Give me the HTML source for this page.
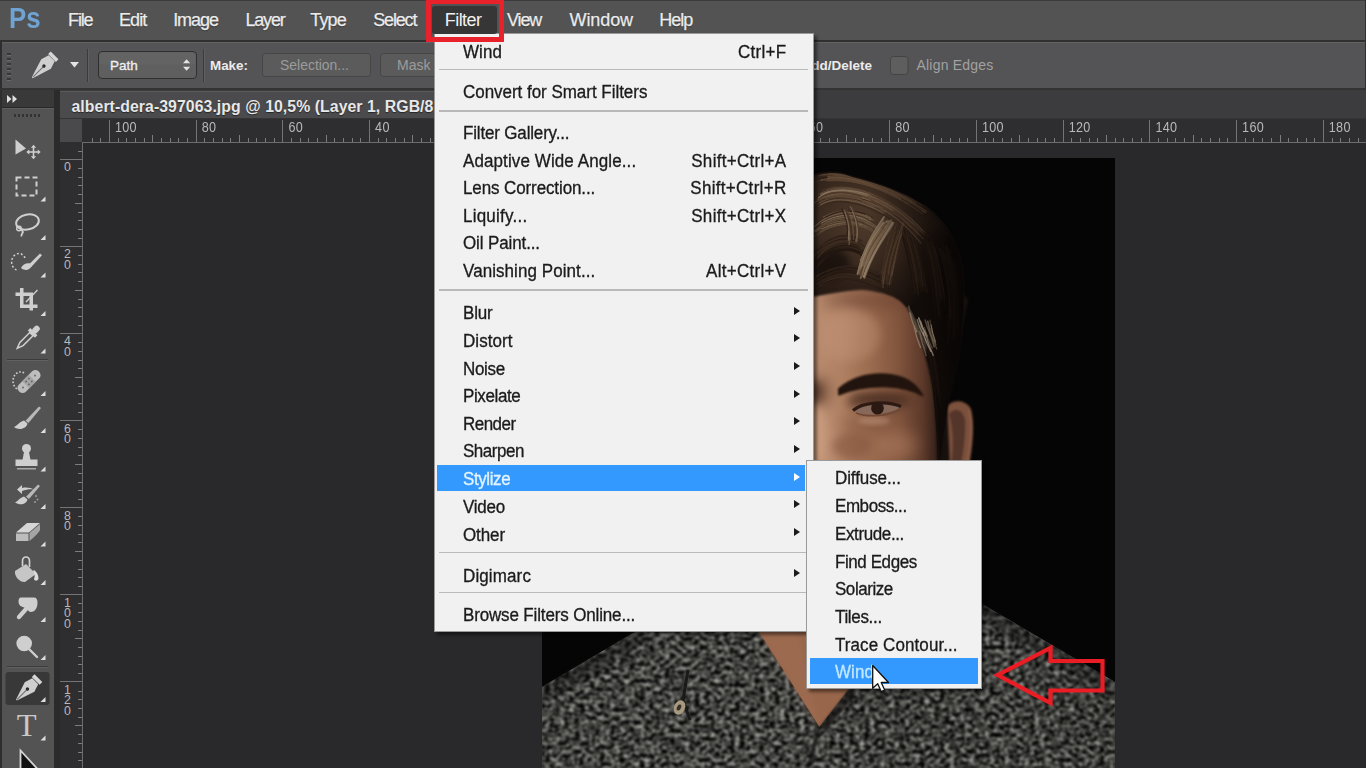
<!DOCTYPE html>
<html lang="en">
<head>
<meta charset="utf-8">
<title>Photoshop - Filter &gt; Stylize &gt; Wind</title>
<style>
*{box-sizing:border-box;margin:0;padding:0}
html,body{width:1366px;height:768px;overflow:hidden;background:#29292b}
body{font-family:"Liberation Sans",sans-serif;position:relative;color:#e6e6e6}
.abs{position:absolute}
#menubar{left:0;top:0;width:1366px;height:40px;background:#535354;border-top:1px solid #3c3c3c}
#menubar span{position:absolute;top:9px;line-height:21px;font-size:18px;color:#ececec;-webkit-text-stroke:0.25px #ececec;letter-spacing:-0.5px;white-space:nowrap;text-shadow:0 1px 1px rgba(0,0,0,.45)}
#ps{left:9px;top:2px;font-size:29px;font-weight:bold;color:#6fa3d4;transform:scaleX(.89);transform-origin:0 0;line-height:33px}
#mbline{left:0;top:40px;width:1366px;height:2px;background:#303030}
#optbar{left:2px;top:42px;width:1364px;height:46px;background:#545355;border-top:1px solid #626262}
#optline{left:0;top:88px;width:1366px;height:2px;background:#333}
#toolhead{left:2px;top:90px;width:52px;height:17px;background:#393939}
#tools{left:2px;top:108px;width:52px;height:660px;background:#535353;border-top:1px solid #5e5e5e}
#leftedge{left:0;top:41px;width:2px;height:727px;background:#2e2e2e}
#gap{left:54px;top:90px;width:6px;height:678px;background:#2b2b2b}
#tabbar{left:60px;top:90px;width:1306px;height:29px;background:#3c3c3e}
#tab{left:60px;top:91px;width:480px;height:28px;background:#4b4b4d;border-top:1px solid #5a5a5a}
#tabtxt{left:71.5px;top:97.7px;font-size:15.8px;letter-spacing:.07px;font-weight:bold;color:#e8e8e8;white-space:nowrap;line-height:18px;text-shadow:0 1px 1px rgba(0,0,0,.5)}
#hruler{left:60px;top:119px;width:1306px;height:24px;background:#2e2e30;border-bottom:1px solid #6c6c6c;overflow:hidden}
#hruler i,#vruler i{position:absolute;background:#7c7c7c;display:block}
#hruler i{bottom:0;width:1px;margin-left:-60px}
#hruler i.mt{height:22px;background:#747474}
#hruler i.t5{height:7px}
#hruler i.t2{height:4px}
#hruler b{position:absolute;top:3.2px;font-weight:normal;font-size:12.6px;letter-spacing:.3px;color:#b8b8b8;margin-left:-60px;line-height:13px;transform:scaleY(1.14);transform-origin:0 50%}
#rcorner{left:60px;top:119px;width:22px;height:24px;background:#4a4a4c}
#vruler{left:60px;top:142px;width:23px;height:626px;background:#2e2e30;border-right:1px solid #6c6c6c;overflow:hidden}
#vruler i{right:0;height:1px}
#vruler i.mt{width:22px;background:#747474}
#vruler i.t5{width:7px}
#vruler i.t2{width:4px}
#vruler b{position:absolute;left:3.5px;font-weight:normal;font-size:12.4px;color:#b8b8b8;line-height:10.6px;text-align:center;width:8px}
.tri{position:absolute;width:0;height:0;border-left:5px solid transparent;border-bottom:5px solid #d8d8d8;left:40px}
.tsep{position:absolute;left:5px;width:41px;height:2px;background:#3e3e3e;border-bottom:1px solid #5e5e5e}
.menu{background:#f1f1f1;border:1px solid #9a9a9a;box-shadow:3px 3px 3px rgba(0,0,0,.45)}
.mi{transform:scaleY(1.06);transform-origin:0 50%;position:absolute;height:28px;line-height:28px;white-space:nowrap;font-size:17px;color:#1b1b1b;-webkit-text-stroke:0.3px currentColor;letter-spacing:-0.1px}
.sc{transform:scaleY(1.06);transform-origin:0 50%;position:absolute;height:28px;line-height:28px;white-space:nowrap;font-size:17px;color:#1b1b1b;-webkit-text-stroke:0.3px currentColor;right:26.3px;text-align:right;letter-spacing:0.3px}
.sep{position:absolute;height:1.4px;background:#b9b9b9;left:4px;right:5px}
.arr{position:absolute;width:0;height:0;border-top:4.5px solid transparent;border-bottom:4.5px solid transparent;border-left:6px solid #1b1b1b}
.hl{position:absolute;background:#3399ff}
#tabline{left:60px;top:117.6px;width:1306px;height:1.5px;background:#343434}
</style>
</head>
<body>
<svg class="abs" id="photo" style="left:542px;top:158px" width="573" height="610" viewBox="542 158 573 610">
<defs>
  <filter id="knit" x="0" y="0" width="100%" height="100%" color-interpolation-filters="sRGB">
    <feTurbulence type="fractalNoise" baseFrequency="0.2 0.24" numOctaves="2" seed="11" result="n"/>
    <feColorMatrix in="n" type="matrix" values="1.3 0 0 0 -0.395  1.3 0 0 0 -0.395  1.26 0 0 0 -0.385  0 0 0 0 1" result="g0"/>
    <feGaussianBlur in="g0" stdDeviation="0.85" result="g"/>
    <feComposite in="g" in2="SourceGraphic" operator="in"/>
  </filter>
  <filter color-interpolation-filters="sRGB" id="b1" x="-20%" y="-20%" width="140%" height="140%"><feGaussianBlur color-interpolation-filters="sRGB" stdDeviation="1"/></filter>
  <filter color-interpolation-filters="sRGB" id="b06" x="-20%" y="-20%" width="140%" height="140%"><feGaussianBlur color-interpolation-filters="sRGB" stdDeviation="0.6"/></filter>
  <filter color-interpolation-filters="sRGB" id="b08" x="-10%" y="-10%" width="120%" height="120%"><feGaussianBlur color-interpolation-filters="sRGB" stdDeviation="0.55"/></filter>
  <filter color-interpolation-filters="sRGB" id="b2" x="-20%" y="-20%" width="140%" height="140%"><feGaussianBlur color-interpolation-filters="sRGB" stdDeviation="2"/></filter>
  <filter color-interpolation-filters="sRGB" id="b4" x="-30%" y="-30%" width="160%" height="160%"><feGaussianBlur color-interpolation-filters="sRGB" stdDeviation="4"/></filter>
  <filter color-interpolation-filters="sRGB" id="b8" x="-40%" y="-40%" width="180%" height="180%"><feGaussianBlur color-interpolation-filters="sRGB" stdDeviation="8"/></filter>
  <linearGradient id="skinH" x1="814" y1="0" x2="940" y2="0" gradientUnits="userSpaceOnUse">
    <stop offset="0" stop-color="#b98c6f"/><stop offset=".22" stop-color="#b08163"/><stop offset=".46" stop-color="#9a6a4e"/><stop offset=".68" stop-color="#7f533c"/><stop offset=".86" stop-color="#5c392a"/><stop offset="1" stop-color="#2e1d16"/>
  </linearGradient>
  <radialGradient id="hairG" cx="862" cy="222" r="100" gradientUnits="userSpaceOnUse">
    <stop offset="0" stop-color="#4e3a2b"/><stop offset=".45" stop-color="#3a2a1f"/><stop offset=".8" stop-color="#261a14"/><stop offset="1" stop-color="#150f0c"/>
  </radialGradient>
  <linearGradient id="hairShade" x1="870" y1="0" x2="962" y2="0" gradientUnits="userSpaceOnUse">
    <stop offset="0" stop-color="#0d0806" stop-opacity="0"/><stop offset=".55" stop-color="#0d0806" stop-opacity=".45"/><stop offset="1" stop-color="#080504" stop-opacity=".9"/>
  </linearGradient>
  <clipPath id="imgclip"><rect x="542" y="158" width="573" height="610"/></clipPath>
  <clipPath id="hairclip"><path d="M811,176 C825,171 840,172 852,177 C880,184 905,193 927,208 C945,222 958,243 962,268 C966,300 963,345 952,385 L948,402 L940,462 L936,400 C932,370 922,340 912,318 C905,300 893,293 862,290 C840,291 825,295 811,297 Z"/></clipPath>
</defs>
<g clip-path="url(#imgclip)">
  <rect x="542" y="158" width="573" height="610" fill="#060505"/>
  <!-- ear -->
  <g filter="url(#b1)">
    <path d="M945,410 C949,399 965,398 971,409 C975,424 973,446 968,472 L942,472 Z" fill="#7b503c"/>
    <path d="M949,414 C955,407 963,409 965,420 C966,436 963,452 960,472 L950,472 C954,450 954,430 949,414Z" fill="#54352a"/>
    <path d="M969,410 C973,425 971,446 966,470" fill="none" stroke="#96674f" stroke-width="1.500" opacity=".8"/>
  </g>
  <!-- face skin -->
  <path d="M805,280 L905,280 C925,330 936,380 938,470 L805,470 Z" fill="url(#skinH)"/>
  <!-- soft light/shadow on face -->
  <g filter="url(#b8)">
    <ellipse cx="830" cy="330" rx="26" ry="30" fill="#bb8d70" opacity=".55"/>
    <ellipse cx="822" cy="440" rx="16" ry="34" fill="#c29477" opacity=".7"/>
    <ellipse cx="895" cy="445" rx="22" ry="14" fill="#ab7a5d" opacity=".6"/>
    <ellipse cx="872" cy="300" rx="50" ry="9" fill="#6d4634" opacity=".7"/>
    <ellipse cx="870" cy="425" rx="34" ry="9" fill="#7c503b" opacity=".55"/>
    <ellipse cx="819" cy="392" rx="9" ry="14" fill="#5a3a2b" opacity=".8"/>
  </g>
  <!-- sideburn / dark side hair -->
  <path d="M898,285 C912,310 926,350 933,390 C936,420 937,445 937,470 L950,470 L947,400 L968,300 L930,250 Z" fill="#17100d" filter="url(#b1)"/>
  <ellipse cx="878" cy="402" rx="32" ry="9" fill="#4a2e22" opacity=".55" filter="url(#b4)"/>
  <ellipse cx="874" cy="421" rx="16" ry="4" fill="#b98f78" opacity=".55" filter="url(#b2)"/>
  <g filter="url(#b4)">
    <ellipse cx="817" cy="436" rx="8" ry="30" fill="#cb9d7f" opacity=".85"/>
    <ellipse cx="852" cy="446" rx="20" ry="13" fill="#83543d" opacity=".6"/>
    <ellipse cx="880" cy="398" rx="30" ry="5" fill="#42281d" opacity=".7"/>
    <ellipse cx="816" cy="392" rx="5" ry="11" fill="#4a2f23" opacity=".8"/>
    <ellipse cx="850" cy="335" rx="30" ry="26" fill="#be9174" opacity=".45"/>
  </g>
  <!-- eyebrow -->
  <g filter="url(#b1)">
    <path d="M839,389 C852,378 868,373.500 886,374.500 C902,375.500 915,382 922.500,395.500 C913,389.500 900,387 886,386.500 C868,386 852,389 839,394.500 Z" fill="#21130d" stroke="#21130d" stroke-width="2" stroke-linejoin="round"/>
  </g>
  <!-- eye -->
  <g filter="url(#b06)">
    <path d="M853,411 C862,403 888,401 901,407 C892,414 866,417 853,411Z" fill="#86695a"/>
    <path d="M853,410.500 C862,402 888,400.500 901,406.500" fill="none" stroke="#2c1a13" stroke-width="3.200"/>
    <circle cx="877.500" cy="408.200" r="6.300" fill="#2a1912"/>
    <path d="M856,413 C868,418 888,416 899,410" fill="none" stroke="#6e4836" stroke-width="1.500"/>
  </g>
  <!-- hair mass -->
  <path d="M811,176 C825,171 840,172 852,177 C880,184 905,193 927,208 C945,222 958,243 962,268 C966,300 963,345 952,385 L948,402 L940,462 L936,400 C932,370 922,340 912,318 C905,300 893,293 862,290 C840,291 825,295 811,297 Z" fill="url(#hairG)" filter="url(#b1)"/>
  <g clip-path="url(#hairclip)">
    <g filter="url(#b4)">
      <ellipse cx="830" cy="264" rx="20" ry="16" fill="#150e0b" opacity=".8"/>
      <ellipse cx="935" cy="275" rx="20" ry="45" fill="#120c09" opacity=".55"/>
      <ellipse cx="952" cy="300" rx="12" ry="70" fill="#0a0706" opacity=".85"/>
    </g>
    <g fill="none" stroke-linecap="round" filter="url(#b08)">
<path d="M824.5,254.3 C838.6,240.6 853.0,242.7 866.2,254.6" stroke="#2a1d15" stroke-width="0.9" opacity="0.88"/>
<path d="M814.7,258.2 C826.7,243.0 843.8,237.3 856.9,244.6" stroke="#3e2d21" stroke-width="0.6" opacity="0.45"/>
<path d="M818.0,265.7 C829.1,250.8 845.5,245.2 857.9,253.1" stroke="#32241a" stroke-width="1.5" opacity="0.9"/>
<path d="M816.2,252.0 C829.2,240.5 842.7,236.6 856.4,241.8" stroke="#1f1510" stroke-width="1.0" opacity="0.61"/>
<path d="M823.8,250.3 C833.9,243.7 843.6,240.8 855.4,244.8" stroke="#2a1d15" stroke-width="1.0" opacity="0.8"/>
<path d="M825.4,252.3 C836.2,244.2 848.3,241.9 856.8,247.5" stroke="#1f1510" stroke-width="1.4" opacity="0.47"/>
<path d="M815.5,268.8 C828.7,251.7 846.4,244.6 860.1,253.0" stroke="#2a1d15" stroke-width="1.1" opacity="0.81"/>
<path d="M817.7,252.1 C834.8,236.2 851.3,235.0 863.4,248.0" stroke="#32241a" stroke-width="0.6" opacity="0.91"/>
<path d="M817.3,248.0 C834.9,233.0 852.1,229.8 864.8,243.5" stroke="#3e2d21" stroke-width="0.8" opacity="0.68"/>
<path d="M825.5,258.3 C840.8,247.2 855.7,247.4 867.8,261.2" stroke="#241811" stroke-width="1.5" opacity="0.76"/>
<path d="M816.7,257.6 C830.7,243.4 844.6,240.3 856.8,245.6" stroke="#1f1510" stroke-width="0.9" opacity="0.8"/>
<path d="M819.5,250.7 C835.0,237.3 851.2,233.5 864.8,246.9" stroke="#1f1510" stroke-width="1.0" opacity="0.86"/>
<path d="M824.5,254.1 C836.8,243.6 849.9,243.4 860.6,250.7" stroke="#1f1510" stroke-width="1.0" opacity="0.71"/>
<path d="M823.4,245.9 C838.5,234.9 852.9,235.3 866.7,248.4" stroke="#3e2d21" stroke-width="0.8" opacity="0.73"/>
<path d="M816.4,263.9 C834.2,244.4 854.7,242.1 869.5,261.2" stroke="#32241a" stroke-width="0.7" opacity="0.9"/>
<path d="M825.3,242.8 C836.5,235.4 848.4,233.3 861.3,241.6" stroke="#1f1510" stroke-width="0.9" opacity="0.59"/>
<path d="M813.9,257.3 C830.7,238.0 850.6,234.9 866.0,251.8" stroke="#32241a" stroke-width="0.9" opacity="0.86"/>
<path d="M818.4,258.8 C831.9,247.1 845.1,241.2 858.5,246.2" stroke="#2a1d15" stroke-width="0.8" opacity="0.91"/>
<path d="M817.5,257.4 C834.5,240.7 852.0,238.9 866.2,254.1" stroke="#32241a" stroke-width="1.1" opacity="0.58"/>
<path d="M820.1,263.7 C833.8,248.9 848.9,245.5 862.1,255.0" stroke="#1f1510" stroke-width="0.5" opacity="0.52"/>
<path d="M818.3,253.1 C831.6,239.6 850.1,237.6 861.6,247.1" stroke="#3e2d21" stroke-width="1.0" opacity="0.88"/>
<path d="M824.8,255.4 C836.4,249.1 847.1,245.3 855.7,251.2" stroke="#241811" stroke-width="0.6" opacity="0.45"/>
<path d="M822.8,252.2 C833.2,244.5 845.9,241.5 858.0,246.5" stroke="#3e2d21" stroke-width="1.0" opacity="0.79"/>
<path d="M826.4,252.8 C836.1,245.5 850.9,244.1 861.7,250.9" stroke="#32241a" stroke-width="1.0" opacity="0.72"/>
<path d="M817.6,257.8 C828.5,242.7 845.4,240.1 857.6,244.0" stroke="#3e2d21" stroke-width="1.5" opacity="0.95"/>
<path d="M813.2,264.8 C831.7,244.6 849.8,239.1 867.8,254.1" stroke="#241811" stroke-width="0.7" opacity="0.85"/>
<path d="M815.2,252.5 C828.7,235.2 845.9,230.7 861.8,240.5" stroke="#2a1d15" stroke-width="0.8" opacity="0.75"/>
<path d="M824.3,250.0 C836.0,241.6 849.4,241.4 860.2,247.3" stroke="#1f1510" stroke-width="0.6" opacity="0.57"/>
<path d="M818.4,264.0 C833.6,244.6 852.5,241.1 868.0,259.2" stroke="#2a1d15" stroke-width="0.6" opacity="0.51"/>
<path d="M816.3,259.2 C833.2,240.3 852.5,237.4 865.7,255.2" stroke="#32241a" stroke-width="1.2" opacity="0.49"/>
<path d="M821.0,260.9 C833.7,248.7 848.0,246.6 859.8,252.0" stroke="#1f1510" stroke-width="1.1" opacity="0.85"/>
<path d="M824.6,249.6 C837.4,239.6 849.1,237.5 860.9,246.0" stroke="#3e2d21" stroke-width="1.2" opacity="0.62"/>
<path d="M818.0,255.7 C832.7,237.8 852.8,235.0 868.1,253.1" stroke="#3e2d21" stroke-width="0.7" opacity="0.58"/>
<path d="M813.8,255.8 C826.8,241.1 844.1,236.2 859.0,243.4" stroke="#3e2d21" stroke-width="1.3" opacity="0.53"/>
<path d="M817.1,263.0 C830.4,247.3 848.4,243.4 862.1,253.6" stroke="#1f1510" stroke-width="1.2" opacity="0.54"/>
<path d="M814.1,283.1 C834.9,265.2 859.1,266.7 890.6,285.3" stroke="#3e2d21" stroke-width="0.6" opacity="0.84"/>
<path d="M815.3,283.2 C832.7,267.4 853.5,268.3 880.1,282.0" stroke="#2a1d15" stroke-width="1.2" opacity="0.77"/>
<path d="M827.3,276.8 C839.8,272.3 855.0,270.1 870.0,277.5" stroke="#32241a" stroke-width="1.0" opacity="0.49"/>
<path d="M816.2,281.4 C835.0,266.4 853.7,266.2 879.9,279.5" stroke="#3e2d21" stroke-width="1.0" opacity="0.52"/>
<path d="M827.3,271.9 C843.3,261.6 861.9,265.3 882.6,276.6" stroke="#32241a" stroke-width="0.6" opacity="0.49"/>
<path d="M814.8,279.6 C831.7,267.4 852.3,264.2 876.9,276.7" stroke="#2a1d15" stroke-width="0.6" opacity="0.83"/>
<path d="M825.5,276.7 C838.0,268.2 852.0,269.9 869.3,273.6" stroke="#2a1d15" stroke-width="1.2" opacity="0.58"/>
<path d="M817.9,284.0 C834.0,276.1 851.1,273.0 871.7,282.3" stroke="#2a1d15" stroke-width="0.6" opacity="0.93"/>
<path d="M821.5,283.2 C836.2,274.1 852.8,274.1 872.6,283.8" stroke="#32241a" stroke-width="1.2" opacity="0.5"/>
<path d="M815.7,284.7 C836.4,268.4 857.1,270.5 883.4,284.2" stroke="#3e2d21" stroke-width="0.5" opacity="0.78"/>
<path d="M819.6,273.8 C839.3,265.7 856.4,263.8 880.2,275.8" stroke="#1f1510" stroke-width="0.9" opacity="0.56"/>
<path d="M816.0,280.2 C834.4,266.2 855.4,267.3 881.5,280.1" stroke="#241811" stroke-width="1.0" opacity="0.62"/>
<path d="M815.9,276.8 C835.5,264.7 855.5,265.1 877.4,275.1" stroke="#3e2d21" stroke-width="1.4" opacity="0.76"/>
<path d="M819.2,285.1 C833.1,275.5 849.7,272.8 867.9,280.6" stroke="#3e2d21" stroke-width="1.0" opacity="0.8"/>
<path d="M827.7,276.4 C841.3,268.1 860.3,272.0 879.3,282.5" stroke="#32241a" stroke-width="0.8" opacity="0.49"/>
<path d="M819.9,275.7 C836.8,265.1 856.9,264.5 879.7,277.3" stroke="#1f1510" stroke-width="1.4" opacity="0.79"/>
<path d="M824.4,282.1 C843.2,273.7 861.8,276.0 880.9,286.0" stroke="#3e2d21" stroke-width="0.9" opacity="0.83"/>
<path d="M815.9,282.4 C836.8,270.8 858.0,270.8 882.1,282.7" stroke="#1f1510" stroke-width="0.8" opacity="0.58"/>
<path d="M828.6,278.7 C840.7,271.3 856.1,274.1 873.0,280.5" stroke="#3e2d21" stroke-width="0.7" opacity="0.69"/>
<path d="M815.8,284.6 C834.3,271.4 853.4,270.0 877.3,282.1" stroke="#3e2d21" stroke-width="0.7" opacity="0.75"/>
<path d="M823.3,279.7 C843.1,272.8 861.1,274.2 884.3,287.5" stroke="#32241a" stroke-width="1.4" opacity="0.76"/>
<path d="M827.6,279.6 C839.2,275.1 854.1,275.6 868.1,280.3" stroke="#32241a" stroke-width="1.2" opacity="0.91"/>
<path d="M822.1,283.5 C841.2,274.1 863.6,277.3 889.5,294.6" stroke="#2a1d15" stroke-width="0.7" opacity="0.92"/>
<path d="M814.5,283.4 C833.5,267.3 859.3,268.3 889.5,288.5" stroke="#1f1510" stroke-width="0.5" opacity="0.85"/>
<path d="M825.0,283.1 C840.8,278.2 855.9,276.7 871.0,285.0" stroke="#2a1d15" stroke-width="1.0" opacity="0.48"/>
<path d="M815.7,280.4 C835.0,268.1 859.1,268.1 882.3,283.6" stroke="#2a1d15" stroke-width="1.0" opacity="0.51"/>
<path d="M828.0,269.5 C840.8,266.5 856.4,264.1 873.0,271.1" stroke="#3e2d21" stroke-width="0.5" opacity="0.71"/>
<path d="M822.7,283.5 C840.4,276.1 862.2,278.2 887.5,292.5" stroke="#241811" stroke-width="1.1" opacity="0.47"/>
<path d="M827.4,271.4 C842.9,263.2 860.0,265.2 878.5,272.8" stroke="#32241a" stroke-width="0.9" opacity="0.94"/>
<path d="M815.6,289.2 C833.6,277.7 853.0,275.0 876.9,286.2" stroke="#3e2d21" stroke-width="0.5" opacity="0.65"/>
<path d="M949.4,251.9 C956.8,274.2 958.6,301.8 957.4,334.7" stroke="#3e2d21" stroke-width="0.6" opacity="0.52"/>
<path d="M940.4,247.9 C950.0,266.1 952.2,289.1 951.7,319.3" stroke="#3e2d21" stroke-width="1.0" opacity="0.67"/>
<path d="M941.6,258.9 C947.3,275.8 950.4,294.4 948.0,317.0" stroke="#32241a" stroke-width="1.0" opacity="0.76"/>
<path d="M935.6,241.1 C946.7,261.8 951.5,292.3 950.4,330.3" stroke="#1f1510" stroke-width="1.1" opacity="0.59"/>
<path d="M943.5,253.0 C951.0,272.0 954.5,294.6 951.7,325.6" stroke="#2a1d15" stroke-width="1.4" opacity="0.6"/>
<path d="M945.5,256.9 C951.3,272.9 953.6,292.6 952.0,316.9" stroke="#32241a" stroke-width="0.9" opacity="0.62"/>
<path d="M939.2,249.2 C945.7,267.4 949.7,291.7 950.7,318.2" stroke="#3e2d21" stroke-width="1.4" opacity="0.87"/>
<path d="M943.1,250.2 C951.7,275.1 955.3,305.2 951.7,340.4" stroke="#3e2d21" stroke-width="0.6" opacity="0.81"/>
<path d="M945.0,251.2 C948.8,271.2 952.1,291.9 952.4,320.5" stroke="#241811" stroke-width="1.2" opacity="0.48"/>
<path d="M945.7,256.6 C949.4,272.5 953.4,293.9 953.4,316.9" stroke="#32241a" stroke-width="1.2" opacity="0.92"/>
<path d="M946.2,253.4 C954.6,271.7 957.4,296.6 954.8,328.2" stroke="#32241a" stroke-width="1.2" opacity="0.67"/>
<path d="M945.5,258.7 C951.1,276.5 953.6,295.4 952.8,318.5" stroke="#1f1510" stroke-width="0.8" opacity="0.5"/>
<path d="M945.2,247.0 C955.8,271.6 958.0,302.5 954.8,339.8" stroke="#1f1510" stroke-width="1.3" opacity="0.74"/>
<path d="M953.2,260.1 C957.2,277.1 959.7,297.8 957.7,325.0" stroke="#3e2d21" stroke-width="1.5" opacity="0.65"/>
<path d="M944.6,241.4 C955.9,259.3 959.2,282.6 958.9,315.0" stroke="#241811" stroke-width="0.8" opacity="0.5"/>
<path d="M947.0,258.0 C954.3,280.3 955.7,308.3 953.5,343.3" stroke="#3e2d21" stroke-width="0.6" opacity="0.6"/>
<path d="M948.2,258.0 C950.9,273.2 953.7,291.0 955.6,314.9" stroke="#2a1d15" stroke-width="0.6" opacity="0.48"/>
<path d="M939.9,250.0 C946.4,269.4 950.7,295.2 948.2,328.2" stroke="#241811" stroke-width="0.6" opacity="0.75"/>
<path d="M947.7,258.7 C953.1,280.8 956.7,305.6 953.2,337.8" stroke="#3e2d21" stroke-width="0.6" opacity="0.74"/>
<path d="M946.7,245.4 C954.0,264.1 957.4,287.6 956.8,315.5" stroke="#241811" stroke-width="0.8" opacity="0.62"/>
<path d="M936.4,244.5 C945.0,264.6 951.6,292.7 947.6,327.9" stroke="#1f1510" stroke-width="1.5" opacity="0.66"/>
<path d="M949.0,257.6 C955.4,276.0 958.5,302.4 954.4,331.5" stroke="#2a1d15" stroke-width="1.0" opacity="0.69"/>
<path d="M942.1,248.6 C951.9,265.4 954.1,290.7 954.7,319.7" stroke="#2a1d15" stroke-width="0.9" opacity="0.77"/>
<path d="M946.1,245.1 C953.9,263.0 957.1,285.1 957.9,312.7" stroke="#241811" stroke-width="1.1" opacity="0.85"/>
<path d="M942.5,253.5 C949.6,277.5 951.6,305.6 948.0,342.9" stroke="#3e2d21" stroke-width="1.0" opacity="0.71"/>
<path d="M952.3,256.5 C959.1,277.6 962.3,304.4 957.0,337.8" stroke="#241811" stroke-width="0.7" opacity="0.48"/>
<path d="M941.6,240.8 C950.8,262.3 956.5,290.7 955.2,323.2" stroke="#2a1d15" stroke-width="1.4" opacity="0.79"/>
<path d="M946.5,246.0 C954.7,268.9 959.2,295.5 957.4,327.4" stroke="#32241a" stroke-width="1.4" opacity="0.85"/>
<path d="M947.5,253.7 C953.4,273.4 956.0,300.4 954.6,334.4" stroke="#32241a" stroke-width="1.3" opacity="0.93"/>
<path d="M949.0,253.1 C957.0,272.9 959.8,302.0 958.3,335.6" stroke="#241811" stroke-width="1.0" opacity="0.86"/>
<path d="M924.8,245.7 C932.3,266.8 934.0,291.3 935.4,316.3" stroke="#1f1510" stroke-width="1.1" opacity="0.72"/>
<path d="M932.6,238.1 C937.2,258.2 940.4,279.6 943.0,304.1" stroke="#241811" stroke-width="0.8" opacity="0.49"/>
<path d="M929.0,233.3 C935.5,254.2 940.7,277.6 942.6,302.9" stroke="#2a1d15" stroke-width="0.5" opacity="0.71"/>
<path d="M927.5,239.7 C932.4,256.9 936.7,275.4 938.4,296.8" stroke="#3e2d21" stroke-width="0.8" opacity="0.5"/>
<path d="M932.1,248.2 C936.9,262.9 937.9,279.9 940.5,296.2" stroke="#3e2d21" stroke-width="1.2" opacity="0.92"/>
<path d="M929.2,249.7 C933.8,264.3 935.5,282.2 939.7,301.1" stroke="#32241a" stroke-width="1.1" opacity="0.65"/>
<path d="M927.9,233.6 C933.6,253.8 938.8,276.6 940.7,304.8" stroke="#2a1d15" stroke-width="1.1" opacity="0.74"/>
<path d="M922.3,232.6 C931.4,254.9 936.3,284.1 939.1,316.6" stroke="#241811" stroke-width="1.1" opacity="0.65"/>
<path d="M928.0,241.7 C934.6,254.8 937.0,273.9 940.7,294.2" stroke="#2a1d15" stroke-width="0.9" opacity="0.88"/>
<path d="M920.7,235.2 C927.2,255.6 932.3,284.7 934.4,312.1" stroke="#241811" stroke-width="0.7" opacity="0.91"/>
<path d="M924.7,233.2 C932.5,253.7 938.4,277.3 938.2,301.7" stroke="#241811" stroke-width="0.8" opacity="0.62"/>
<path d="M923.4,235.1 C932.3,257.4 936.2,284.8 941.0,317.5" stroke="#32241a" stroke-width="0.9" opacity="0.46"/>
<path d="M927.9,245.1 C933.0,261.6 935.7,279.6 937.1,298.1" stroke="#1f1510" stroke-width="1.3" opacity="0.58"/>
<path d="M929.7,236.7 C936.6,251.3 940.0,273.8 944.1,295.4" stroke="#241811" stroke-width="0.7" opacity="0.78"/>
<path d="M931.4,238.7 C940.0,260.8 942.7,282.6 945.6,308.0" stroke="#2a1d15" stroke-width="1.1" opacity="0.61"/>
<path d="M929.4,238.2 C934.7,256.3 938.0,282.2 940.8,307.3" stroke="#1f1510" stroke-width="0.6" opacity="0.57"/>
<path d="M931.5,242.3 C936.2,258.6 939.1,278.7 941.9,299.0" stroke="#32241a" stroke-width="1.4" opacity="0.76"/>
<path d="M923.2,233.9 C928.9,252.6 934.2,274.1 937.2,299.7" stroke="#1f1510" stroke-width="0.5" opacity="0.53"/>
<path d="M934.9,246.7 C939.0,261.7 941.0,281.5 944.3,302.8" stroke="#241811" stroke-width="1.4" opacity="0.46"/>
<path d="M926.2,236.2 C932.4,254.8 935.4,272.7 939.6,295.0" stroke="#2a1d15" stroke-width="1.1" opacity="0.92"/>
<path d="M922.5,239.1 C932.3,259.9 936.3,287.4 938.4,312.6" stroke="#3e2d21" stroke-width="1.1" opacity="0.47"/>
<path d="M929.6,243.6 C934.6,261.2 938.2,281.7 940.3,302.3" stroke="#32241a" stroke-width="1.1" opacity="0.84"/>
<path d="M924.7,237.3 C933.8,258.5 938.1,287.3 939.1,318.3" stroke="#32241a" stroke-width="1.5" opacity="0.61"/>
<path d="M929.1,250.6 C932.2,264.9 935.9,278.6 936.6,296.7" stroke="#32241a" stroke-width="1.5" opacity="0.85"/>
<path d="M922.8,235.2 C929.8,252.9 934.5,277.9 936.6,305.1" stroke="#1f1510" stroke-width="1.2" opacity="0.94"/>
<path d="M928.4,239.5 C936.0,259.8 938.5,282.5 939.6,310.9" stroke="#1f1510" stroke-width="1.5" opacity="0.57"/>
<path d="M925.8,241.5 C930.4,256.1 934.0,275.0 936.5,296.7" stroke="#32241a" stroke-width="0.8" opacity="0.83"/>
<path d="M921.5,239.6 C928.0,255.6 932.1,277.1 933.3,301.6" stroke="#2a1d15" stroke-width="0.6" opacity="0.6"/>
<path d="M934.3,247.4 C938.7,263.7 941.5,279.0 944.7,298.4" stroke="#3e2d21" stroke-width="1.2" opacity="0.86"/>
<path d="M934.1,237.6 C938.4,256.8 943.8,277.9 944.6,303.6" stroke="#241811" stroke-width="0.5" opacity="0.69"/>
<path d="M907.1,240.2 C911.7,251.4 913.2,265.0 915.4,277.2" stroke="#32241a" stroke-width="1.2" opacity="0.79"/>
<path d="M905.2,230.2 C911.0,243.6 915.5,260.2 917.2,277.3" stroke="#443224" stroke-width="0.8" opacity="0.56"/>
<path d="M906.8,231.0 C911.7,245.8 915.3,261.8 918.7,278.6" stroke="#32241a" stroke-width="0.6" opacity="0.66"/>
<path d="M903.3,234.3 C908.3,247.9 911.5,264.8 915.8,279.8" stroke="#32241a" stroke-width="0.9" opacity="0.53"/>
<path d="M905.9,227.2 C913.5,243.0 917.7,263.7 920.2,283.5" stroke="#3e2d21" stroke-width="1.2" opacity="0.9"/>
<path d="M902.6,226.1 C908.0,242.9 912.9,260.6 916.6,283.4" stroke="#241811" stroke-width="0.7" opacity="0.81"/>
<path d="M902.7,233.3 C906.2,245.5 911.2,261.0 911.9,278.5" stroke="#2a1d15" stroke-width="0.7" opacity="0.51"/>
<path d="M914.6,238.7 C919.0,255.4 923.2,271.3 927.4,293.0" stroke="#3a2a1f" stroke-width="1.3" opacity="0.61"/>
<path d="M911.1,231.1 C917.5,250.1 923.0,268.7 924.8,291.9" stroke="#2a1d15" stroke-width="1.4" opacity="0.76"/>
<path d="M907.0,237.7 C911.4,251.5 916.6,269.5 918.3,287.3" stroke="#3a2a1f" stroke-width="1.4" opacity="0.73"/>
<path d="M902.1,237.4 C908.8,254.4 912.8,273.8 915.0,293.7" stroke="#32241a" stroke-width="1.1" opacity="0.8"/>
<path d="M913.7,238.1 C916.6,249.3 919.8,265.6 923.5,279.3" stroke="#241811" stroke-width="1.3" opacity="0.57"/>
<path d="M904.4,238.3 C909.6,249.2 911.8,262.3 915.9,276.0" stroke="#241811" stroke-width="0.9" opacity="0.83"/>
<path d="M904.8,228.7 C911.5,246.7 916.4,267.3 918.9,294.0" stroke="#2a1d15" stroke-width="0.8" opacity="0.76"/>
<path d="M903.9,229.5 C908.6,244.6 913.5,257.7 917.6,275.1" stroke="#241811" stroke-width="1.3" opacity="0.74"/>
<path d="M900.3,230.9 C905.9,246.9 911.0,268.0 915.7,290.4" stroke="#443224" stroke-width="0.5" opacity="0.52"/>
<path d="M902.5,237.0 C907.7,250.4 911.5,263.0 913.9,278.3" stroke="#32241a" stroke-width="0.8" opacity="0.63"/>
<path d="M906.6,235.3 C909.9,251.7 914.5,265.5 917.2,283.8" stroke="#32241a" stroke-width="0.8" opacity="0.78"/>
<path d="M907.9,240.1 C912.3,252.2 915.8,266.0 916.3,283.1" stroke="#443224" stroke-width="0.9" opacity="0.87"/>
<path d="M910.9,233.2 C914.0,249.0 916.4,260.8 919.6,279.2" stroke="#443224" stroke-width="0.7" opacity="0.75"/>
<path d="M901.7,236.3 C905.4,247.3 909.7,262.6 913.0,277.8" stroke="#241811" stroke-width="0.6" opacity="0.89"/>
<path d="M914.0,235.8 C914.9,248.1 920.7,262.2 921.7,276.1" stroke="#3a2a1f" stroke-width="1.0" opacity="0.57"/>
<path d="M905.1,224.9 C910.0,240.6 915.0,258.6 920.4,279.5" stroke="#241811" stroke-width="0.7" opacity="0.94"/>
<path d="M901.0,229.5 C905.4,245.0 908.8,261.6 912.0,279.2" stroke="#241811" stroke-width="1.2" opacity="0.92"/>
<path d="M910.0,230.8 C917.3,247.2 920.2,268.5 924.8,291.1" stroke="#2a1d15" stroke-width="0.7" opacity="0.67"/>
<path d="M909.2,229.2 C915.5,243.1 918.7,260.0 921.6,280.2" stroke="#3a2a1f" stroke-width="0.6" opacity="0.51"/>
<path d="M903.9,233.0 C910.0,245.7 913.3,261.1 914.4,275.8" stroke="#32241a" stroke-width="0.8" opacity="0.83"/>
<path d="M910.7,237.4 C914.6,253.2 918.3,270.2 920.2,287.9" stroke="#241811" stroke-width="1.5" opacity="0.79"/>
<path d="M906.7,235.3 C911.3,253.8 915.6,272.7 918.2,295.0" stroke="#443224" stroke-width="1.3" opacity="0.56"/>
<path d="M908.4,229.1 C913.0,246.5 919.2,266.6 922.7,291.3" stroke="#2a1d15" stroke-width="0.6" opacity="0.82"/>
<path d="M908.3,228.6 C915.8,245.4 920.5,264.6 922.7,285.6" stroke="#443224" stroke-width="0.8" opacity="0.94"/>
<path d="M908.2,228.3 C914.6,247.1 918.8,269.1 920.9,292.2" stroke="#2a1d15" stroke-width="0.9" opacity="0.91"/>
<path d="M905.2,229.3 C910.0,244.0 914.8,263.7 918.9,282.0" stroke="#443224" stroke-width="0.6" opacity="0.89"/>
<path d="M907.6,224.4 C913.9,241.8 918.0,262.6 923.6,286.6" stroke="#3a2a1f" stroke-width="0.8" opacity="0.69"/>
<path d="M908.9,235.1 C914.6,251.9 917.7,269.6 923.0,290.3" stroke="#3e2d21" stroke-width="0.7" opacity="0.66"/>
<path d="M828.2,177.9 C855.3,175.0 888.8,187.0 925.5,212.8" stroke="#6d5440" stroke-width="1.4" opacity="0.93"/>
<path d="M835.7,176.1 C857.0,176.9 884.6,187.4 914.8,204.8" stroke="#513c2c" stroke-width="1.2" opacity="0.48"/>
<path d="M835.6,177.9 C858.5,179.5 886.9,186.7 918.8,210.5" stroke="#4a3628" stroke-width="1.4" opacity="0.52"/>
<path d="M828.6,173.5 C851.0,173.3 878.1,179.4 908.7,197.3" stroke="#7a624b" stroke-width="0.8" opacity="0.57"/>
<path d="M835.1,174.4 C859.0,174.9 888.8,183.6 921.1,204.7" stroke="#6d5440" stroke-width="1.0" opacity="0.72"/>
<path d="M825.3,180.4 C850.9,176.0 885.5,187.2 922.5,213.9" stroke="#7a624b" stroke-width="1.0" opacity="0.49"/>
<path d="M827.1,179.0 C847.0,178.6 874.9,184.6 908.6,203.6" stroke="#6d5440" stroke-width="1.2" opacity="0.64"/>
<path d="M820.1,178.8 C845.5,174.0 881.7,185.6 920.9,209.9" stroke="#241811" stroke-width="1.4" opacity="0.57"/>
<path d="M823.2,175.9 C842.8,172.2 869.5,177.9 899.6,194.9" stroke="#4a3628" stroke-width="0.8" opacity="0.83"/>
<path d="M833.3,176.4 C854.0,175.9 878.5,181.4 907.7,200.5" stroke="#5e4634" stroke-width="0.7" opacity="0.92"/>
<path d="M814.2,180.8 C832.8,176.3 861.2,179.8 893.0,195.9" stroke="#241811" stroke-width="0.9" opacity="0.47"/>
<path d="M827.3,180.8 C846.9,179.4 870.6,182.9 896.9,196.4" stroke="#58412f" stroke-width="1.3" opacity="0.83"/>
<path d="M833.2,175.8 C857.8,175.3 888.2,185.8 926.8,211.4" stroke="#6d5440" stroke-width="1.2" opacity="0.8"/>
<path d="M827.7,176.2 C850.4,173.7 879.2,182.4 915.6,202.9" stroke="#58412f" stroke-width="1.5" opacity="0.84"/>
<path d="M828.5,177.1 C852.7,176.3 877.9,184.5 912.8,203.5" stroke="#7a624b" stroke-width="1.3" opacity="0.48"/>
<path d="M819.5,175.5 C839.4,170.7 869.2,176.6 905.4,197.5" stroke="#58412f" stroke-width="1.5" opacity="0.57"/>
<path d="M829.5,177.9 C852.1,178.7 876.8,185.6 905.5,202.4" stroke="#5e4634" stroke-width="1.0" opacity="0.57"/>
<path d="M829.7,178.9 C847.5,178.3 870.4,184.1 897.0,196.2" stroke="#7a624b" stroke-width="0.7" opacity="0.86"/>
<path d="M819.3,179.8 C844.6,174.4 876.4,183.4 918.2,207.6" stroke="#3e2d21" stroke-width="0.8" opacity="0.5"/>
<path d="M836.5,173.5 C858.7,173.4 891.8,186.5 928.7,208.7" stroke="#4a3628" stroke-width="1.5" opacity="0.48"/>
<path d="M821.0,180.4 C839.9,177.1 865.4,181.3 897.4,198.3" stroke="#58412f" stroke-width="1.4" opacity="0.63"/>
<path d="M821.2,179.9 C842.6,174.0 874.1,182.5 911.9,202.7" stroke="#7a624b" stroke-width="1.0" opacity="0.76"/>
<path d="M828.1,180.2 C848.3,178.8 876.7,185.1 909.4,205.1" stroke="#5e4634" stroke-width="0.8" opacity="0.9"/>
<path d="M823.3,179.4 C848.1,175.4 878.7,182.6 914.9,205.3" stroke="#3e2d21" stroke-width="0.8" opacity="0.77"/>
<path d="M822.5,174.4 C846.5,172.9 877.1,180.3 911.6,200.9" stroke="#6d5440" stroke-width="0.6" opacity="0.84"/>
<path d="M827.6,176.6 C847.4,175.1 873.6,181.4 905.3,198.0" stroke="#5e4634" stroke-width="1.0" opacity="0.73"/>
<path d="M831.7,176.4 C853.4,175.6 884.5,185.9 921.6,209.6" stroke="#513c2c" stroke-width="1.2" opacity="0.62"/>
<path d="M827.6,178.5 C846.6,175.7 872.6,182.4 901.1,198.9" stroke="#7a624b" stroke-width="1.0" opacity="0.62"/>
<path d="M813.7,182.2 C835.8,174.1 865.3,180.4 898.5,197.3" stroke="#58412f" stroke-width="0.7" opacity="0.64"/>
<path d="M828.9,177.3 C851.2,177.8 877.9,184.7 908.7,200.9" stroke="#5e4634" stroke-width="1.2" opacity="0.65"/>
<path d="M899.7,234.1 C897.2,249.0 894.5,261.1 891.0,276.9" stroke="#58412f" stroke-width="0.6" opacity="0.72"/>
<path d="M898.7,224.1 C891.9,244.2 889.2,260.2 886.4,278.6" stroke="#3e2d21" stroke-width="1.5" opacity="0.88"/>
<path d="M892.2,232.8 C889.3,246.5 883.8,259.4 882.2,273.9" stroke="#5e4634" stroke-width="1.4" opacity="0.74"/>
<path d="M903.3,228.6 C897.8,246.3 893.1,263.7 890.9,283.3" stroke="#58412f" stroke-width="1.5" opacity="0.47"/>
<path d="M891.2,236.8 C887.2,248.4 885.2,257.6 884.5,270.6" stroke="#4a3628" stroke-width="0.6" opacity="0.59"/>
<path d="M896.3,236.5 C889.6,250.8 887.0,263.2 884.3,282.6" stroke="#513c2c" stroke-width="0.6" opacity="0.49"/>
<path d="M892.8,222.8 C887.5,241.2 885.1,254.4 881.7,272.8" stroke="#5e4634" stroke-width="1.0" opacity="0.52"/>
<path d="M896.5,223.8 C890.9,244.5 886.1,259.2 883.8,282.9" stroke="#58412f" stroke-width="1.3" opacity="0.64"/>
<path d="M898.7,229.9 C891.7,250.2 889.1,264.4 886.7,284.1" stroke="#58412f" stroke-width="1.0" opacity="0.56"/>
<path d="M899.6,237.3 C898.0,251.1 895.0,262.3 891.3,276.2" stroke="#5e4634" stroke-width="1.4" opacity="0.65"/>
<path d="M891.3,233.6 C888.5,249.1 885.3,262.5 883.3,277.9" stroke="#3e2d21" stroke-width="0.7" opacity="0.87"/>
<path d="M895.2,231.4 C891.1,248.6 887.1,264.5 883.8,284.2" stroke="#58412f" stroke-width="1.3" opacity="0.58"/>
<path d="M904.8,223.2 C898.6,243.4 894.8,260.0 890.8,284.0" stroke="#3e2d21" stroke-width="1.1" opacity="0.85"/>
<path d="M892.2,229.3 C888.9,248.1 883.4,263.1 882.6,284.2" stroke="#58412f" stroke-width="1.4" opacity="0.57"/>
<path d="M892.3,236.7 C886.9,249.8 885.5,265.3 881.3,283.5" stroke="#6d5440" stroke-width="0.6" opacity="0.46"/>
<path d="M903.0,222.1 C897.6,239.9 890.8,253.6 888.4,274.3" stroke="#7a624b" stroke-width="0.9" opacity="0.62"/>
<path d="M894.8,228.0 C889.2,243.5 884.0,258.8 882.4,281.1" stroke="#58412f" stroke-width="1.0" opacity="0.65"/>
<path d="M894.3,230.7 C890.5,247.0 885.1,261.7 882.7,282.9" stroke="#3e2d21" stroke-width="0.5" opacity="0.76"/>
<path d="M899.1,223.6 C894.2,244.4 889.3,259.3 885.9,282.9" stroke="#4a3628" stroke-width="0.6" opacity="0.61"/>
<path d="M894.9,226.8 C889.5,242.0 886.4,255.5 882.1,271.1" stroke="#4a3628" stroke-width="1.3" opacity="0.71"/>
<path d="M897.8,238.3 C893.7,255.2 888.8,267.5 887.6,287.0" stroke="#513c2c" stroke-width="0.5" opacity="0.84"/>
<path d="M893.5,238.9 C888.6,253.3 884.2,266.8 883.1,287.4" stroke="#6d5440" stroke-width="1.3" opacity="0.61"/>
<path d="M893.3,238.2 C891.6,247.8 889.6,258.1 885.7,269.6" stroke="#58412f" stroke-width="1.0" opacity="0.46"/>
<path d="M894.7,223.4 C889.6,240.0 885.0,255.4 881.9,274.3" stroke="#3e2d21" stroke-width="1.2" opacity="0.72"/>
<path d="M891.9,236.6 C887.0,248.4 885.4,260.6 881.8,275.6" stroke="#3e2d21" stroke-width="0.6" opacity="0.56"/>
<path d="M904.5,226.0 C897.4,242.1 894.7,253.7 892.9,269.8" stroke="#241811" stroke-width="1.2" opacity="0.57"/>
<path d="M901.6,234.1 C896.0,248.3 895.2,260.1 891.8,275.3" stroke="#6d5440" stroke-width="1.2" opacity="0.9"/>
<path d="M893.6,223.9 C890.7,241.9 885.9,255.1 882.4,275.6" stroke="#4a3628" stroke-width="1.0" opacity="0.47"/>
<path d="M893.7,237.1 C889.6,252.0 886.4,263.6 883.3,278.3" stroke="#3e2d21" stroke-width="0.6" opacity="0.74"/>
<path d="M897.4,223.2 C893.0,242.2 889.3,257.7 887.4,276.8" stroke="#3e2d21" stroke-width="0.5" opacity="0.58"/>
<path d="M897.0,235.0 C892.5,248.7 889.6,260.4 888.6,274.0" stroke="#58412f" stroke-width="1.5" opacity="0.62"/>
<path d="M890.4,237.8 C890.1,247.0 886.9,259.3 883.9,269.9" stroke="#4a3628" stroke-width="1.0" opacity="0.55"/>
<path d="M892.4,233.5 C889.8,247.6 886.3,256.6 882.8,270.7" stroke="#3e2d21" stroke-width="0.6" opacity="0.86"/>
<path d="M896.9,233.1 C891.3,250.2 886.5,264.0 883.8,287.2" stroke="#241811" stroke-width="0.7" opacity="0.67"/>
<path d="M903.6,223.4 C898.5,244.7 892.4,259.7 889.3,284.6" stroke="#5e4634" stroke-width="1.3" opacity="0.84"/>
<path d="M822.1,222.5 C836.3,215.3 855.4,211.9 869.4,222.9" stroke="#8a7660" stroke-width="0.9" opacity="0.55"/>
<path d="M826.1,216.1 C840.1,209.7 854.4,209.3 870.3,216.7" stroke="#756049" stroke-width="0.7" opacity="0.85"/>
<path d="M819.0,224.4 C833.6,212.9 850.1,211.4 865.5,216.4" stroke="#6d5743" stroke-width="0.8" opacity="0.49"/>
<path d="M823.2,220.1 C837.8,211.1 854.1,210.2 870.9,219.9" stroke="#7d6750" stroke-width="1.2" opacity="0.93"/>
<path d="M821.3,230.1 C834.3,220.3 849.3,218.8 863.8,225.3" stroke="#4a3628" stroke-width="1.1" opacity="0.76"/>
<path d="M822.0,228.8 C835.9,222.6 849.6,220.9 862.0,224.7" stroke="#756049" stroke-width="1.2" opacity="0.89"/>
<path d="M817.5,235.6 C834.2,220.8 856.2,220.6 876.4,234.5" stroke="#5e4634" stroke-width="0.8" opacity="0.67"/>
<path d="M820.7,220.0 C836.2,210.2 854.7,211.5 869.7,219.0" stroke="#5e4634" stroke-width="0.7" opacity="0.71"/>
<path d="M823.2,222.5 C841.9,213.3 859.7,215.3 877.6,227.4" stroke="#2a1d15" stroke-width="1.0" opacity="0.87"/>
<path d="M821.4,226.3 C834.4,216.2 850.8,214.1 864.8,220.7" stroke="#756049" stroke-width="1.4" opacity="0.71"/>
<path d="M828.8,223.7 C843.2,218.2 859.1,218.5 873.2,226.7" stroke="#7d6750" stroke-width="1.0" opacity="0.61"/>
<path d="M827.3,225.1 C841.8,218.0 859.2,220.9 873.1,229.3" stroke="#7d6750" stroke-width="0.6" opacity="0.94"/>
<path d="M822.0,220.6 C837.8,212.9 852.9,211.0 866.3,219.0" stroke="#5e4634" stroke-width="1.2" opacity="0.89"/>
<path d="M826.3,228.9 C842.5,221.8 861.6,222.3 880.2,234.6" stroke="#5e4634" stroke-width="1.2" opacity="0.66"/>
<path d="M822.2,220.4 C837.4,209.5 854.8,207.9 872.2,218.5" stroke="#5e4a38" stroke-width="0.7" opacity="0.55"/>
<path d="M813.4,236.9 C827.6,225.8 846.7,220.2 866.3,227.3" stroke="#85705a" stroke-width="0.5" opacity="0.67"/>
<path d="M819.8,229.0 C834.0,216.8 852.6,215.1 867.3,221.5" stroke="#5e4a38" stroke-width="0.7" opacity="0.89"/>
<path d="M821.2,227.4 C835.7,218.0 853.6,215.8 870.9,226.6" stroke="#4a3628" stroke-width="1.3" opacity="0.68"/>
<path d="M827.1,215.4 C841.4,207.8 857.3,209.8 873.3,220.5" stroke="#7d6750" stroke-width="1.0" opacity="0.62"/>
<path d="M818.8,229.4 C830.6,219.0 848.7,216.8 865.9,222.7" stroke="#32241a" stroke-width="1.2" opacity="0.54"/>
<path d="M814.9,226.2 C830.2,212.1 853.4,208.1 870.5,218.4" stroke="#6d5743" stroke-width="1.3" opacity="0.84"/>
<path d="M815.4,231.6 C835.0,216.0 856.6,213.1 876.0,227.3" stroke="#6d5743" stroke-width="1.4" opacity="0.59"/>
<path d="M821.8,223.0 C840.7,211.4 859.6,212.9 878.4,228.1" stroke="#8a7660" stroke-width="0.9" opacity="0.95"/>
<path d="M819.8,232.0 C835.6,222.9 853.9,221.0 872.5,230.8" stroke="#5e4a38" stroke-width="1.4" opacity="0.82"/>
<path d="M826.4,222.8 C842.9,214.8 863.0,216.4 878.6,228.0" stroke="#5e4a38" stroke-width="1.2" opacity="0.54"/>
<path d="M823.3,217.1 C837.5,210.6 852.7,209.6 866.2,215.3" stroke="#6d5743" stroke-width="1.2" opacity="0.83"/>
<path d="M815.9,232.2 C830.6,223.0 850.4,218.3 866.7,227.1" stroke="#7d6750" stroke-width="0.6" opacity="0.48"/>
<path d="M814.5,231.0 C834.6,213.5 857.6,214.2 879.6,230.5" stroke="#756049" stroke-width="1.2" opacity="0.76"/>
<path d="M814.8,224.2 C832.6,209.0 853.4,207.1 873.0,217.4" stroke="#2a1d15" stroke-width="0.9" opacity="0.61"/>
<path d="M819.7,227.2 C835.7,215.6 856.5,216.0 876.2,227.0" stroke="#2a1d15" stroke-width="0.7" opacity="0.64"/>
<path d="M816.3,228.6 C831.8,219.2 849.1,215.9 865.8,221.1" stroke="#4a3628" stroke-width="1.4" opacity="0.5"/>
<path d="M818.8,223.8 C835.7,211.3 857.1,210.6 874.0,222.7" stroke="#32241a" stroke-width="0.5" opacity="0.9"/>
<path d="M821.5,223.8 C835.8,214.7 853.8,215.3 867.9,223.0" stroke="#756049" stroke-width="0.6" opacity="0.78"/>
<path d="M826.0,216.9 C838.3,210.3 851.9,209.4 864.8,214.1" stroke="#2a1d15" stroke-width="1.1" opacity="0.9"/>
<path d="M821.9,225.1 C840.9,216.2 859.5,216.5 879.8,229.0" stroke="#756049" stroke-width="0.9" opacity="0.45"/>
<path d="M818.0,196.6 C835.0,187.0 859.8,189.3 890.4,207.0" stroke="#2a1d15" stroke-width="1.5" opacity="0.69"/>
<path d="M828.2,195.9 C842.5,188.9 865.9,194.6 888.9,209.7" stroke="#85705a" stroke-width="1.1" opacity="0.7"/>
<path d="M822.1,202.1 C837.2,196.1 857.4,196.2 881.8,211.0" stroke="#5e4634" stroke-width="0.5" opacity="0.91"/>
<path d="M826.6,191.8 C843.4,184.6 871.2,191.2 898.5,210.1" stroke="#6d5743" stroke-width="1.1" opacity="0.48"/>
<path d="M814.8,208.7 C829.7,196.8 859.6,198.5 894.1,221.5" stroke="#32241a" stroke-width="1.5" opacity="0.56"/>
<path d="M819.2,198.6 C836.2,188.9 857.7,192.6 883.4,206.7" stroke="#5e4634" stroke-width="1.1" opacity="0.95"/>
<path d="M826.3,198.8 C840.6,193.2 861.4,196.9 885.8,212.1" stroke="#756049" stroke-width="1.2" opacity="0.81"/>
<path d="M826.9,193.2 C842.2,187.0 865.8,190.3 889.2,206.4" stroke="#8a7660" stroke-width="0.6" opacity="0.84"/>
<path d="M823.0,198.6 C835.5,193.1 855.2,194.0 874.1,204.0" stroke="#5e4a38" stroke-width="1.4" opacity="0.92"/>
<path d="M821.5,196.5 C833.9,189.4 855.6,192.0 878.6,202.1" stroke="#6d5743" stroke-width="0.6" opacity="0.91"/>
<path d="M822.7,195.2 C838.7,188.5 864.0,191.2 892.4,208.6" stroke="#8a7660" stroke-width="0.6" opacity="0.79"/>
<path d="M820.8,194.6 C839.0,187.6 864.7,188.4 892.4,207.8" stroke="#8a7660" stroke-width="1.4" opacity="0.66"/>
<path d="M826.9,189.2 C837.3,185.0 856.9,186.4 876.5,196.9" stroke="#5e4a38" stroke-width="0.7" opacity="0.87"/>
<path d="M822.3,201.0 C839.5,194.9 866.2,197.8 893.8,215.9" stroke="#32241a" stroke-width="1.4" opacity="0.8"/>
<path d="M824.3,196.4 C837.6,190.5 857.0,191.8 879.8,202.6" stroke="#6d5743" stroke-width="1.2" opacity="0.49"/>
<path d="M828.6,192.6 C839.1,189.2 857.4,188.6 875.3,198.6" stroke="#4a3628" stroke-width="1.0" opacity="0.49"/>
<path d="M815.6,206.8 C830.4,197.1 852.0,196.8 878.2,209.3" stroke="#32241a" stroke-width="0.6" opacity="0.51"/>
<path d="M820.7,197.2 C838.1,188.9 863.7,189.9 893.5,211.0" stroke="#4a3628" stroke-width="1.5" opacity="0.72"/>
<path d="M818.5,206.6 C832.1,195.7 854.9,196.8 884.3,213.6" stroke="#4a3628" stroke-width="1.3" opacity="0.93"/>
<path d="M827.4,195.7 C841.8,191.6 861.9,194.5 882.5,207.4" stroke="#756049" stroke-width="1.2" opacity="0.95"/>
<path d="M821.2,197.8 C833.7,192.0 852.8,190.0 873.3,201.3" stroke="#5e4a38" stroke-width="0.6" opacity="0.8"/>
<path d="M823.5,193.3 C841.6,188.8 863.0,192.0 889.5,206.3" stroke="#8a7660" stroke-width="1.0" opacity="0.74"/>
<path d="M818.2,199.5 C835.3,190.9 861.7,191.5 892.3,210.2" stroke="#7d6750" stroke-width="1.4" opacity="0.82"/>
<path d="M823.3,195.3 C837.3,188.5 860.9,190.2 885.9,205.1" stroke="#4a3628" stroke-width="1.4" opacity="0.63"/>
<path d="M818.6,197.4 C831.4,187.7 850.3,187.6 875.1,197.3" stroke="#85705a" stroke-width="1.4" opacity="0.91"/>
<path d="M825.3,199.4 C838.9,193.7 855.6,195.0 876.4,205.9" stroke="#5e4a38" stroke-width="1.1" opacity="0.84"/>
<path d="M822.6,194.2 C838.6,186.7 864.4,191.0 894.4,209.1" stroke="#85705a" stroke-width="1.1" opacity="0.91"/>
<path d="M815.9,200.3 C826.6,191.6 848.9,188.4 874.3,201.5" stroke="#5e4a38" stroke-width="0.7" opacity="0.52"/>
<path d="M818.8,203.6 C832.2,194.3 851.7,196.1 874.2,206.9" stroke="#85705a" stroke-width="0.6" opacity="0.67"/>
<path d="M819.4,202.5 C833.4,193.5 861.8,194.7 893.5,214.7" stroke="#756049" stroke-width="0.9" opacity="0.45"/>
<path d="M819.4,201.1 C834.9,195.2 856.6,196.2 880.4,206.4" stroke="#5e4a38" stroke-width="0.9" opacity="0.46"/>
<path d="M823.4,199.7 C837.9,195.1 859.6,198.3 882.8,209.4" stroke="#2a1d15" stroke-width="1.0" opacity="0.47"/>
<path d="M818.8,198.9 C836.5,190.9 860.0,192.0 889.0,210.1" stroke="#7d6750" stroke-width="0.6" opacity="0.49"/>
<path d="M818.6,194.5 C833.3,185.6 854.6,185.8 880.3,199.0" stroke="#6d5743" stroke-width="0.6" opacity="0.7"/>
<path d="M814.4,202.8 C831.6,190.5 855.6,191.5 882.4,205.2" stroke="#5e4a38" stroke-width="1.3" opacity="0.84"/>
<path d="M827.2,197.3 C838.5,190.4 858.4,193.8 877.5,201.9" stroke="#7d6750" stroke-width="0.6" opacity="0.82"/>
<path d="M818.8,199.1 C831.6,189.3 853.3,190.8 881.5,204.6" stroke="#4a3628" stroke-width="1.4" opacity="0.9"/>
<path d="M820.6,198.6 C836.8,191.0 861.9,193.5 891.3,212.2" stroke="#5e4634" stroke-width="0.8" opacity="0.9"/>
<path d="M820.5,204.7 C834.9,196.2 858.4,198.9 883.3,213.0" stroke="#6d5743" stroke-width="1.1" opacity="0.94"/>
<path d="M821.1,190.7 C841.0,183.5 869.0,185.7 901.1,210.0" stroke="#5e4a38" stroke-width="0.8" opacity="0.46"/>
<path d="M816.3,201.3 C831.4,194.7 850.7,192.7 877.5,204.5" stroke="#4a3628" stroke-width="0.8" opacity="0.51"/>
<path d="M819.0,200.0 C835.0,192.8 854.4,195.9 877.9,206.2" stroke="#5e4634" stroke-width="0.9" opacity="0.82"/>
<path d="M827.8,202.0 C841.3,195.8 859.0,200.0 878.2,207.6" stroke="#6d5743" stroke-width="0.5" opacity="0.86"/>
<path d="M820.4,193.3 C839.2,183.6 862.6,187.2 889.5,202.9" stroke="#7d6750" stroke-width="0.7" opacity="0.52"/>
<path d="M868.6,198.9 C885.6,206.0 899.3,216.5 916.2,230.4" stroke="#5e4634" stroke-width="0.7" opacity="0.67"/>
<path d="M876.2,200.9 C888.6,206.0 903.9,215.7 916.4,229.2" stroke="#58412f" stroke-width="0.9" opacity="0.59"/>
<path d="M875.2,200.6 C891.6,207.1 908.5,217.2 924.4,234.8" stroke="#6d5440" stroke-width="1.1" opacity="0.82"/>
<path d="M862.7,199.4 C881.5,202.6 904.6,217.9 923.0,238.8" stroke="#3e2d21" stroke-width="1.5" opacity="0.69"/>
<path d="M861.1,199.8 C880.1,205.2 902.9,220.0 920.8,243.3" stroke="#6d5440" stroke-width="0.9" opacity="0.87"/>
<path d="M868.1,196.5 C883.9,201.6 902.9,213.6 918.8,230.7" stroke="#513c2c" stroke-width="1.4" opacity="0.69"/>
<path d="M861.6,199.1 C877.5,201.5 892.0,210.9 907.5,225.0" stroke="#241811" stroke-width="0.9" opacity="0.82"/>
<path d="M874.9,201.3 C888.2,206.8 903.0,218.1 918.9,235.1" stroke="#7a624b" stroke-width="0.9" opacity="0.83"/>
<path d="M861.2,194.7 C877.6,199.7 898.3,211.9 917.9,231.7" stroke="#6d5440" stroke-width="0.9" opacity="0.47"/>
<path d="M866.7,194.0 C881.0,199.5 899.2,209.7 913.9,224.4" stroke="#7a624b" stroke-width="1.5" opacity="0.53"/>
<path d="M875.9,198.2 C893.4,204.9 910.3,215.6 928.3,236.4" stroke="#4a3628" stroke-width="0.8" opacity="0.61"/>
<path d="M862.4,197.7 C876.3,202.1 894.5,211.6 911.5,227.4" stroke="#7a624b" stroke-width="1.4" opacity="0.76"/>
<path d="M866.0,193.9 C881.8,198.5 902.9,209.7 922.0,230.7" stroke="#6d5440" stroke-width="1.3" opacity="0.63"/>
<path d="M870.1,199.8 C880.9,204.6 894.5,211.7 909.4,224.0" stroke="#5e4634" stroke-width="1.1" opacity="0.66"/>
<path d="M872.0,201.4 C888.6,208.3 908.2,221.3 923.3,238.7" stroke="#58412f" stroke-width="1.2" opacity="0.83"/>
<path d="M864.1,193.6 C883.2,198.1 905.2,210.1 924.3,232.1" stroke="#7a624b" stroke-width="1.3" opacity="0.52"/>
<path d="M872.0,195.8 C889.5,200.7 907.6,213.8 925.2,235.4" stroke="#241811" stroke-width="0.7" opacity="0.69"/>
<path d="M869.6,194.6 C886.5,199.4 903.5,212.7 918.8,227.9" stroke="#513c2c" stroke-width="1.0" opacity="0.84"/>
<path d="M861.3,199.9 C878.6,203.4 897.3,215.2 915.0,233.8" stroke="#3e2d21" stroke-width="0.5" opacity="0.7"/>
<path d="M859.2,198.6 C877.1,203.8 897.3,215.0 915.4,236.1" stroke="#6d5440" stroke-width="0.9" opacity="0.58"/>
<path d="M870.2,200.9 C886.6,205.8 901.9,217.5 917.3,235.4" stroke="#4a3628" stroke-width="1.2" opacity="0.55"/>
<path d="M862.8,201.3 C882.8,206.4 901.5,220.3 920.9,242.8" stroke="#6d5440" stroke-width="0.8" opacity="0.85"/>
<path d="M887.6,220.5 C878.4,232.3 869.9,246.2 860.4,269.0" stroke="#5e4634" stroke-width="2.1" opacity="0.85"/>
<path d="M885.9,229.2 C878.9,240.7 869.9,255.6 864.3,276.5" stroke="#6d5743" stroke-width="2.1" opacity="0.84"/>
<path d="M881.7,228.2 C873.7,238.6 868.1,247.6 862.8,265.5" stroke="#94806a" stroke-width="1.8" opacity="0.73"/>
<path d="M889.8,221.0 C877.4,233.4 868.6,249.5 861.7,275.9" stroke="#7d6750" stroke-width="1.9" opacity="0.65"/>
<path d="M886.3,228.2 C879.0,237.4 871.2,246.5 866.3,263.3" stroke="#5e4634" stroke-width="1.3" opacity="0.68"/>
<path d="M884.8,232.7 C879.7,242.0 873.4,250.1 867.9,264.8" stroke="#5e4634" stroke-width="2.0" opacity="0.87"/>
<path d="M883.4,223.2 C877.2,235.2 868.9,247.3 861.7,263.0" stroke="#94806a" stroke-width="1.3" opacity="0.94"/>
<path d="M887.0,221.3 C879.1,233.5 869.6,246.7 863.3,264.8" stroke="#8a7660" stroke-width="1.8" opacity="0.77"/>
<path d="M886.5,226.1 C880.0,235.0 872.0,247.2 867.5,263.0" stroke="#94806a" stroke-width="1.4" opacity="0.86"/>
<path d="M893.7,222.8 C884.3,238.7 873.4,250.4 864.5,278.0" stroke="#8a7660" stroke-width="1.8" opacity="0.71"/>
<path d="M877.3,228.5 C873.2,235.6 866.4,247.0 863.4,257.1" stroke="#5e4634" stroke-width="1.5" opacity="0.87"/>
<path d="M884.6,229.2 C878.6,243.0 868.2,253.3 864.8,274.1" stroke="#5e4634" stroke-width="1.4" opacity="0.81"/>
<path d="M888.2,226.6 C878.2,237.0 872.8,248.0 864.3,264.2" stroke="#6d5743" stroke-width="1.5" opacity="0.7"/>
<path d="M886.2,221.6 C876.8,230.6 870.5,241.5 862.8,256.9" stroke="#94806a" stroke-width="1.1" opacity="0.76"/>
<path d="M878.8,226.4 C873.2,235.5 867.3,246.5 860.3,260.2" stroke="#94806a" stroke-width="1.2" opacity="0.76"/>
<path d="M888.7,221.1 C878.6,230.5 869.8,244.1 862.4,265.1" stroke="#7d6750" stroke-width="1.6" opacity="0.76"/>
<path d="M891.3,220.3 C881.5,235.4 870.1,249.6 860.7,278.0" stroke="#7d6750" stroke-width="2.1" opacity="0.81"/>
<path d="M884.0,217.1 C873.7,232.1 863.8,247.2 857.5,274.0" stroke="#9a866e" stroke-width="1.8" opacity="0.79"/>
<path d="M884.2,223.9 C873.6,235.9 864.5,251.5 860.0,273.8" stroke="#5e4634" stroke-width="1.6" opacity="0.7"/>
<path d="M885.6,222.5 C878.7,236.0 867.6,251.3 862.4,273.2" stroke="#8a7660" stroke-width="1.6" opacity="0.64"/>
<path d="M884.1,228.9 C874.0,241.3 865.0,252.9 860.6,275.7" stroke="#5e4634" stroke-width="1.9" opacity="0.83"/>
<path d="M883.9,219.4 C873.8,234.1 864.0,246.1 859.7,268.5" stroke="#7d6750" stroke-width="1.1" opacity="0.73"/>
<path d="M881.5,222.4 C873.2,233.7 865.1,246.6 859.9,265.6" stroke="#7d6750" stroke-width="1.6" opacity="0.92"/>
<path d="M886.4,224.3 C881.2,233.9 872.3,245.8 866.8,260.2" stroke="#7d6750" stroke-width="1.9" opacity="0.72"/>
<path d="M886.4,223.0 C878.8,234.0 870.4,243.1 863.1,260.7" stroke="#5e4634" stroke-width="2.1" opacity="0.81"/>
<path d="M892.3,222.7 C883.4,238.0 872.7,251.5 863.7,276.7" stroke="#94806a" stroke-width="2.1" opacity="0.89"/>
<path d="M881.7,228.1 C873.9,239.1 864.9,249.6 860.9,269.8" stroke="#5e4634" stroke-width="1.2" opacity="0.86"/>
<path d="M882.5,223.3 C873.3,237.9 864.5,251.2 858.8,274.0" stroke="#7d6750" stroke-width="1.6" opacity="0.75"/>
<path d="M880.7,229.0 C874.5,238.1 866.1,248.8 862.9,265.5" stroke="#7d6750" stroke-width="2.0" opacity="0.77"/>
<path d="M884.0,222.0 C874.9,234.0 864.7,248.5 860.8,267.7" stroke="#94806a" stroke-width="1.2" opacity="0.83"/>
<path d="M852.7,211.9 C857.6,220.3 858.7,230.0 855.7,241.7" stroke="#756049" stroke-width="1.1" opacity="0.81"/>
<path d="M853.4,210.8 C857.2,219.4 858.5,228.6 856.7,242.5" stroke="#5e4a38" stroke-width="1.2" opacity="0.51"/>
<path d="M852.2,206.7 C855.9,214.4 859.2,222.1 857.1,234.5" stroke="#6d5743" stroke-width="0.6" opacity="0.45"/>
<path d="M848.2,208.0 C855.0,215.9 855.6,224.1 855.2,237.9" stroke="#2a1d15" stroke-width="0.6" opacity="0.48"/>
<path d="M842.9,206.6 C848.1,214.7 851.5,224.3 849.8,233.5" stroke="#2a1d15" stroke-width="0.8" opacity="0.77"/>
<path d="M851.2,207.9 C856.2,215.5 859.1,224.8 859.2,238.9" stroke="#4a3628" stroke-width="1.1" opacity="0.94"/>
<path d="M843.7,210.2 C847.8,219.0 851.3,231.3 849.1,244.5" stroke="#6d5743" stroke-width="1.3" opacity="0.89"/>
<path d="M844.1,215.5 C847.2,220.1 848.8,228.4 849.2,239.2" stroke="#85705a" stroke-width="1.5" opacity="0.69"/>
<path d="M847.9,213.4 C850.6,220.1 852.2,226.8 852.2,234.5" stroke="#32241a" stroke-width="1.3" opacity="0.59"/>
<path d="M846.9,210.5 C851.5,218.8 853.2,225.8 852.4,233.9" stroke="#5e4634" stroke-width="1.1" opacity="0.61"/>
<path d="M843.2,211.7 C846.9,219.4 850.2,228.8 850.4,239.3" stroke="#7d6750" stroke-width="1.3" opacity="0.48"/>
<path d="M850.5,206.7 C856.0,217.2 858.4,227.6 856.8,241.5" stroke="#85705a" stroke-width="0.9" opacity="0.88"/>
<path d="M844.8,209.9 C847.1,218.7 849.7,229.4 848.3,240.4" stroke="#8a7660" stroke-width="0.9" opacity="0.78"/>
<path d="M843.6,210.4 C850.1,219.3 850.3,228.9 850.0,242.2" stroke="#5e4634" stroke-width="0.6" opacity="0.56"/>
<path d="M843.0,207.0 C849.8,214.0 851.2,224.6 850.5,237.8" stroke="#4a3628" stroke-width="1.4" opacity="0.63"/>
<path d="M850.3,215.0 C851.8,221.7 854.7,230.5 853.5,239.3" stroke="#6d5743" stroke-width="1.2" opacity="0.55"/>
<path d="M842.0,209.0 C845.4,217.6 849.1,226.1 847.1,234.3" stroke="#2a1d15" stroke-width="1.4" opacity="0.84"/>
<path d="M907.0,308.5 C911.3,321.8 919.6,336.4 927.2,352.1" stroke="#4e4036" stroke-width="1.1" opacity="0.64"/>
<path d="M903.6,317.9 C906.8,325.2 912.4,334.6 916.9,341.3" stroke="#6e5e4e" stroke-width="0.8" opacity="0.54"/>
<path d="M905.0,314.0 C910.7,325.2 917.1,338.0 922.1,349.8" stroke="#5e5044" stroke-width="1.3" opacity="0.59"/>
<path d="M903.8,312.2 C908.4,324.6 915.3,335.7 920.3,347.8" stroke="#4e4036" stroke-width="1.1" opacity="0.5"/>
<path d="M911.9,312.9 C914.7,321.7 921.9,331.8 925.6,341.8" stroke="#5e5044" stroke-width="1.3" opacity="0.72"/>
<path d="M909.3,312.9 C915.2,322.1 919.4,336.0 927.0,345.9" stroke="#6e5e4e" stroke-width="1.5" opacity="0.49"/>
<path d="M907.6,315.4 C912.8,326.5 917.1,338.5 925.8,348.5" stroke="#86766a" stroke-width="1.2" opacity="0.69"/>
<path d="M905.1,307.5 C908.4,320.6 916.0,333.9 925.6,348.2" stroke="#7c6c5a" stroke-width="1.1" opacity="0.95"/>
<path d="M905.5,311.6 C911.9,323.5 915.7,332.1 921.4,343.6" stroke="#4e4036" stroke-width="1.1" opacity="0.52"/>
<path d="M907.7,313.4 C912.1,322.2 915.2,330.1 920.6,340.2" stroke="#4e4036" stroke-width="1.4" opacity="0.93"/>
<path d="M904.0,309.8 C909.5,321.0 916.2,336.8 922.0,351.2" stroke="#4e4036" stroke-width="1.8" opacity="0.51"/>
<path d="M906.4,312.1 C909.9,321.1 916.0,331.8 923.3,344.9" stroke="#7c6c5a" stroke-width="0.8" opacity="0.66"/>
<path d="M911.2,311.6 C914.3,321.8 919.8,332.0 926.2,344.5" stroke="#4e4036" stroke-width="1.2" opacity="0.61"/>
<path d="M908.7,312.1 C914.4,323.8 920.4,336.7 925.5,348.0" stroke="#7c6c5a" stroke-width="1.4" opacity="0.72"/>
<path d="M908.9,309.6 C916.2,323.0 920.1,335.3 927.4,347.9" stroke="#7c6c5a" stroke-width="1.7" opacity="0.79"/>
<path d="M908.2,307.6 C911.3,319.3 918.6,333.1 927.4,348.9" stroke="#7c6c5a" stroke-width="1.2" opacity="0.71"/>
<path d="M903.4,308.9 C908.4,320.1 915.3,331.6 922.2,346.5" stroke="#5e5044" stroke-width="1.6" opacity="0.88"/>
<path d="M906.5,307.9 C911.4,320.4 915.6,330.1 923.2,344.1" stroke="#86766a" stroke-width="1.2" opacity="0.91"/>
<path d="M907.6,315.9 C911.1,324.6 915.6,331.8 920.0,340.2" stroke="#86766a" stroke-width="1.0" opacity="0.9"/>
<path d="M907.8,316.2 C911.6,325.5 917.1,333.7 922.6,344.7" stroke="#86766a" stroke-width="1.1" opacity="0.65"/>
<path d="M908.7,305.9 C911.0,319.2 917.8,329.8 924.6,345.7" stroke="#86766a" stroke-width="1.5" opacity="0.74"/>
<path d="M906.7,313.9 C912.7,327.1 917.5,340.2 926.2,352.5" stroke="#5e5044" stroke-width="1.0" opacity="0.87"/>
<path d="M907.3,307.8 C911.5,321.9 918.9,336.0 926.4,348.5" stroke="#4e4036" stroke-width="1.2" opacity="0.92"/>
<path d="M903.7,307.6 C907.9,319.0 915.0,333.4 923.0,348.6" stroke="#86766a" stroke-width="1.1" opacity="0.58"/>
<path d="M906.4,310.5 C912.3,323.0 919.5,336.7 925.3,350.0" stroke="#86766a" stroke-width="1.2" opacity="0.56"/>
<path d="M910.2,309.4 C915.7,320.9 922.7,333.0 930.0,345.6" stroke="#5e5044" stroke-width="1.1" opacity="0.81"/>
<path d="M926.3,344.1 C930.6,358.3 932.0,378.6 935.1,399.1" stroke="#3e2d21" stroke-width="0.8" opacity="0.67"/>
<path d="M929.0,333.7 C933.5,350.0 937.2,371.0 939.8,393.2" stroke="#3e2d21" stroke-width="1.1" opacity="0.72"/>
<path d="M924.2,329.7 C929.1,351.1 934.0,379.3 936.5,407.8" stroke="#32241a" stroke-width="1.1" opacity="0.45"/>
<path d="M927.5,344.7 C930.5,360.8 932.2,379.2 933.0,395.6" stroke="#241811" stroke-width="0.6" opacity="0.58"/>
<path d="M929.6,339.1 C934.3,357.6 937.5,376.8 940.7,398.9" stroke="#1f1510" stroke-width="0.8" opacity="0.92"/>
<path d="M926.1,335.9 C928.9,349.8 934.1,370.0 936.6,390.5" stroke="#32241a" stroke-width="0.7" opacity="0.53"/>
<path d="M929.4,344.4 C934.8,358.7 938.0,376.6 938.0,395.1" stroke="#241811" stroke-width="0.9" opacity="0.72"/>
<path d="M931.1,346.4 C935.1,360.4 937.6,378.9 937.7,396.7" stroke="#241811" stroke-width="0.9" opacity="0.62"/>
<path d="M928.0,334.6 C931.5,348.7 935.3,368.4 936.4,386.9" stroke="#2a1d15" stroke-width="1.1" opacity="0.72"/>
<path d="M924.9,335.8 C930.0,356.3 932.2,381.6 934.9,410.0" stroke="#241811" stroke-width="1.2" opacity="0.53"/>
<path d="M926.9,347.5 C930.3,364.0 934.6,384.7 935.0,405.9" stroke="#241811" stroke-width="0.5" opacity="0.61"/>
<path d="M924.8,335.6 C930.6,351.9 933.6,368.7 934.4,389.7" stroke="#2a1d15" stroke-width="0.7" opacity="0.84"/>
<path d="M926.8,333.0 C935.0,352.2 936.7,381.5 940.7,407.5" stroke="#32241a" stroke-width="1.1" opacity="0.84"/>    </g>
    <rect x="860" y="165" width="110" height="300" fill="url(#hairShade)"/>
  </g>
  <g fill="none" stroke-linecap="round" filter="url(#b08)" transform="translate(6,3)">
    <path d="M908.7,318.7 q2.1,9.2 6.8,18.4" stroke="#5a4a3c" stroke-width="1.4" opacity="0.69"/>
    <path d="M924.8,325.4 q1.8,10.3 5.9,20.6" stroke="#5a4a3c" stroke-width="1.3" opacity="0.78"/>
    <path d="M914.4,323.2 q1.8,7.9 6.0,15.8" stroke="#6a5a4a" stroke-width="1.3" opacity="0.46"/>
    <path d="M921.7,318.2 q2.0,12.7 6.6,25.5" stroke="#9a8a76" stroke-width="1.6" opacity="0.56"/>
    <path d="M917.3,329.7 q2.3,9.3 7.6,18.7" stroke="#a69682" stroke-width="1.3" opacity="0.77"/>
    <path d="M913.7,328.2 q2.0,12.3 6.6,24.5" stroke="#8a7a66" stroke-width="1.3" opacity="0.55"/>
    <path d="M919.1,328.1 q2.4,12.1 8.1,24.3" stroke="#a69682" stroke-width="1.4" opacity="0.66"/>
    <path d="M912.8,315.1 q2.3,9.0 7.8,18.0" stroke="#9a8a76" stroke-width="1.7" opacity="0.85"/>
    <path d="M919.1,317.0 q3.2,12.2 10.8,24.3" stroke="#6a5a4a" stroke-width="1.4" opacity="0.74"/>
    <path d="M908.1,323.5 q1.9,10.4 6.4,20.9" stroke="#9a8a76" stroke-width="1.3" opacity="0.71"/>
    <path d="M914.6,318.0 q1.9,7.4 6.4,14.8" stroke="#9a8a76" stroke-width="1.2" opacity="0.76"/>
    <path d="M923.9,317.3 q1.7,10.7 5.5,21.4" stroke="#5a4a3c" stroke-width="1.4" opacity="0.67"/>
    <path d="M925.1,322.1 q1.3,8.4 4.3,16.8" stroke="#9a8a76" stroke-width="1.0" opacity="0.69"/>
    <path d="M903.8,309.9 q2.1,9.4 7.0,18.9" stroke="#8a7a66" stroke-width="1.5" opacity="0.84"/>
    <path d="M911.2,316.6 q2.0,7.8 6.6,15.7" stroke="#a69682" stroke-width="1.3" opacity="0.66"/>
    <path d="M918.5,324.4 q2.3,10.4 7.7,20.7" stroke="#6a5a4a" stroke-width="1.1" opacity="0.70"/>
  </g>
  <!-- sweater -->
  <path d="M542,768 L542,687 L633,633 L700,600 L982,600 L982,604 L1115,682 L1115,768 Z" fill="#4a4a46"/>
  <path d="M542,768 L542,687 L633,633 L700,600 L982,600 L982,604 L1115,682 L1115,768 Z" fill="#fff" filter="url(#knit)"/>
  <!-- collar ribs (right) -->
  <g stroke="#141412" stroke-width="3.500" opacity=".32" fill="none" filter="url(#b1)">
    <path d="M850,700 l26,70 M864,690 l30,80 M880,690 l32,80 M896,690 l34,80 M912,690 l36,80 M928,690 l38,80 M944,690 l40,80 M960,690 l42,80 M976,690 l44,80 M990,640 l56,130 M1004,630 l60,140 M1018,632 l62,140 M1032,640 l62,130 M1046,648 l60,122 M1060,656 l58,114 M1074,664 l50,106 M1088,672 l40,98 M1102,680 l30,90"/>
  </g>
  <!-- shoulder shading -->
  <path d="M542,687 L633,633 L650,640 L542,705Z" fill="#111" opacity=".45" filter="url(#b2)"/>
  <path d="M982,604 L1115,682 L1115,700 L982,620Z" fill="#111" opacity=".4" filter="url(#b2)"/>
  <!-- neck V -->
  <path d="M735,600 L761,635 L819.500,727 L849,689 L895,600 Z" fill="#98664b"/>
  <path d="M770,600 L761,635 L819.500,727 L800,640 Z" fill="#a06d52" opacity=".6" filter="url(#b2)"/>
  <path d="M849,689 L819.500,727 L826,731 L857,693Z" fill="#151311" opacity=".7" filter="url(#b1)"/>
  <path d="M819.500,727 L808,768" stroke="#0f0e0d" stroke-width="3.500" opacity=".7" filter="url(#b1)"/>
  <!-- toggle button -->
  <g filter="url(#b06)">
    <path d="M688,670 L683,700 L690,720" stroke="#1b1a18" stroke-width="3" fill="none"/>
    <ellipse cx="679.500" cy="707.500" rx="5.500" ry="7.500" fill="#a79a80" transform="rotate(25 679.500 707.500)"/>
    <ellipse cx="679" cy="707.500" rx="2" ry="3.200" fill="#3a3128" transform="rotate(25 679 707.500)"/>
  </g>
</g>
</svg>
<div class="abs" id="menubar">
  <span style="left:68.1px;letter-spacing:-1.17px">File</span>
  <span style="left:119.1px;letter-spacing:-0.98px">Edit</span>
  <span style="left:173.2px;letter-spacing:-1.08px">Image</span>
  <span style="left:245.5px;letter-spacing:-1.21px">Layer</span>
  <span style="left:310.3px;letter-spacing:-0.84px">Type</span>
  <span style="left:373.2px;letter-spacing:-1.15px">Select</span>
  <span style="left:507.1px;letter-spacing:-1.17px">View</span>
  <span style="left:569.5px;letter-spacing:-0.09px">Window</span>
  <span style="left:659.2px;letter-spacing:-1.01px">Help</span>
</div>
<div class="abs" id="ps">Ps</div>
<div class="abs" id="mbline"></div>
<div class="abs" id="leftedge"></div>
<div class="abs" id="optbar"></div>
<svg class="abs" style="left:0;top:42px" width="920" height="46" viewBox="0 42 920 46">
  <!-- grip -->
  <g fill="#373737"><rect x="7" y="53" width="4" height="2"/><rect x="7" y="58" width="4" height="2"/><rect x="7" y="63" width="4" height="2"/><rect x="7" y="68" width="4" height="2"/><rect x="7" y="73" width="4" height="2"/><rect x="7" y="78" width="4" height="2"/></g>
  <g fill="#6a6a6a"><rect x="7" y="55" width="4" height="1"/><rect x="7" y="60" width="4" height="1"/><rect x="7" y="65" width="4" height="1"/><rect x="7" y="70" width="4" height="1"/><rect x="7" y="75" width="4" height="1"/><rect x="7" y="80" width="4" height="1"/></g>
  <!-- pen icon -->
  <g transform="translate(45,65) rotate(45)">
    <path d="M-5.5,-13.5 h11 v3.6 h-11z" fill="#d6d6d6"/>
    <path d="M-4.2,-9.5 h8.4 l2.6,8 L0.6,18 h-1.2 L-6.8,-1.5z" fill="#cfcfcf"/>
    <path d="M0,3 V17" stroke="#6a6a6a" stroke-width="1"/>
    <circle cx="0" cy="1.5" r="1.7" fill="#2a2a2a"/>
  </g>
  <path d="M70,62 h9 l-4.5,5.5z" fill="#e4e4e4"/>
  <rect x="87" y="49" width="1" height="33" fill="#3b3b3b"/><rect x="88" y="49" width="1" height="33" fill="#5f5f5f"/>
  <!-- Path dropdown -->
  <rect x="98.500" y="51.500" width="98" height="27" rx="3.500" fill="#5f5f5f" stroke="#2f2f2f"/>
  <rect x="99.500" y="52.500" width="96" height="12" rx="2.500" fill="#666" opacity=".55"/>
  <text x="110" y="70" font-size="13.500" fill="#efefef" font-family="Liberation Sans, sans-serif" stroke="#efefef" stroke-width=".3">Path</text>
  <path d="M183,63.300 l3.600,-4 l3.600,4z M183,66.800 l3.600,4 l3.600,-4z" fill="#e2e2e2"/>
  <rect x="203" y="49" width="1" height="33" fill="#3b3b3b"/><rect x="204" y="49" width="1" height="33" fill="#5f5f5f"/>
  <text x="210" y="69.500" font-size="12.500" font-weight="bold" fill="#ececec" font-family="Liberation Sans, sans-serif" textLength="38" lengthAdjust="spacingAndGlyphs">Make:</text>
  <rect x="262.500" y="53.500" width="108" height="23" rx="3" fill="#5b5b5b" stroke="#454545"/>
  <text x="280" y="70" font-size="14" fill="#9b9b9b" font-family="Liberation Sans, sans-serif" textLength="69" lengthAdjust="spacingAndGlyphs">Selection...</text>
  <rect x="380.500" y="53.500" width="70" height="23" rx="3" fill="#5b5b5b" stroke="#454545"/>
  <text x="397" y="70" font-size="14" fill="#9b9b9b" font-family="Liberation Sans, sans-serif">Mask</text>
  <text x="801.500" y="70" font-size="13.500" font-weight="bold" fill="#ececec" font-family="Liberation Sans, sans-serif">Add/Delete</text>
  <rect x="890.500" y="56.500" width="17.500" height="18" rx="3" fill="#5e5e5e" stroke="#444"/>
</svg>
<div class="abs" style="left:916.500px;top:56.500px;font-size:14px;color:#a2a2a2;white-space:nowrap;letter-spacing:0.2px">Align Edges</div>
<div class="abs" id="optline"></div>
<div class="abs" id="tabbar"></div>
<div class="abs" id="tab"></div>
<div class="abs" id="tabtxt">albert-dera-397063.jpg @ 10,5% (Layer 1, RGB/8</div>
<div class="abs" id="tabline"></div>
<div class="abs" id="hruler"><i class="mt" style="left:109.0px"></i><b style="left:115.0px">100</b><i class="mt" style="left:195.7px"></i><b style="left:201.7px">80</b><i class="mt" style="left:282.4px"></i><b style="left:288.4px">60</b><i class="mt" style="left:369.1px"></i><b style="left:375.1px">40</b><i class="mt" style="left:455.8px"></i><b style="left:461.8px">20</b><i class="mt" style="left:542.5px"></i><b style="left:548.5px">0</b><i class="mt" style="left:629.2px"></i><b style="left:635.2px">20</b><i class="mt" style="left:715.9px"></i><b style="left:721.9px">40</b><i class="mt" style="left:802.6px"></i><b style="left:808.6px">60</b><i class="mt" style="left:889.3px"></i><b style="left:895.3px">80</b><i class="mt" style="left:976.0px"></i><b style="left:982.0px">100</b><i class="mt" style="left:1062.7px"></i><b style="left:1068.7px">120</b><i class="mt" style="left:1149.4px"></i><b style="left:1155.4px">140</b><i class="mt" style="left:1236.1px"></i><b style="left:1242.1px">160</b><i class="mt" style="left:1322.8px"></i><b style="left:1328.8px">180</b><i class="t2" style="left:91.7px"></i><i class="t2" style="left:100.3px"></i><i class="t2" style="left:117.7px"></i><i class="t2" style="left:126.3px"></i><i class="t2" style="left:135.0px"></i><i class="t2" style="left:143.7px"></i><i class="t5" style="left:152.4px"></i><i class="t2" style="left:161.0px"></i><i class="t2" style="left:169.7px"></i><i class="t2" style="left:178.4px"></i><i class="t2" style="left:187.0px"></i><i class="t2" style="left:204.4px"></i><i class="t2" style="left:213.0px"></i><i class="t2" style="left:221.7px"></i><i class="t2" style="left:230.4px"></i><i class="t5" style="left:239.1px"></i><i class="t2" style="left:247.7px"></i><i class="t2" style="left:256.4px"></i><i class="t2" style="left:265.1px"></i><i class="t2" style="left:273.7px"></i><i class="t2" style="left:291.1px"></i><i class="t2" style="left:299.7px"></i><i class="t2" style="left:308.4px"></i><i class="t2" style="left:317.1px"></i><i class="t5" style="left:325.8px"></i><i class="t2" style="left:334.4px"></i><i class="t2" style="left:343.1px"></i><i class="t2" style="left:351.8px"></i><i class="t2" style="left:360.4px"></i><i class="t2" style="left:377.8px"></i><i class="t2" style="left:386.4px"></i><i class="t2" style="left:395.1px"></i><i class="t2" style="left:403.8px"></i><i class="t5" style="left:412.4px"></i><i class="t2" style="left:421.1px"></i><i class="t2" style="left:429.8px"></i><i class="t2" style="left:438.5px"></i><i class="t2" style="left:447.1px"></i><i class="t2" style="left:464.5px"></i><i class="t2" style="left:473.1px"></i><i class="t2" style="left:481.8px"></i><i class="t2" style="left:490.5px"></i><i class="t5" style="left:499.1px"></i><i class="t2" style="left:507.8px"></i><i class="t2" style="left:516.5px"></i><i class="t2" style="left:525.2px"></i><i class="t2" style="left:533.8px"></i><i class="t2" style="left:551.2px"></i><i class="t2" style="left:559.8px"></i><i class="t2" style="left:568.5px"></i><i class="t2" style="left:577.2px"></i><i class="t5" style="left:585.9px"></i><i class="t2" style="left:594.5px"></i><i class="t2" style="left:603.2px"></i><i class="t2" style="left:611.9px"></i><i class="t2" style="left:620.5px"></i><i class="t2" style="left:637.9px"></i><i class="t2" style="left:646.5px"></i><i class="t2" style="left:655.2px"></i><i class="t2" style="left:663.9px"></i><i class="t5" style="left:672.5px"></i><i class="t2" style="left:681.2px"></i><i class="t2" style="left:689.9px"></i><i class="t2" style="left:698.6px"></i><i class="t2" style="left:707.2px"></i><i class="t2" style="left:724.6px"></i><i class="t2" style="left:733.2px"></i><i class="t2" style="left:741.9px"></i><i class="t2" style="left:750.6px"></i><i class="t5" style="left:759.2px"></i><i class="t2" style="left:767.9px"></i><i class="t2" style="left:776.6px"></i><i class="t2" style="left:785.3px"></i><i class="t2" style="left:793.9px"></i><i class="t2" style="left:811.3px"></i><i class="t2" style="left:819.9px"></i><i class="t2" style="left:828.6px"></i><i class="t2" style="left:837.3px"></i><i class="t5" style="left:846.0px"></i><i class="t2" style="left:854.6px"></i><i class="t2" style="left:863.3px"></i><i class="t2" style="left:872.0px"></i><i class="t2" style="left:880.6px"></i><i class="t2" style="left:898.0px"></i><i class="t2" style="left:906.6px"></i><i class="t2" style="left:915.3px"></i><i class="t2" style="left:924.0px"></i><i class="t5" style="left:932.6px"></i><i class="t2" style="left:941.3px"></i><i class="t2" style="left:950.0px"></i><i class="t2" style="left:958.7px"></i><i class="t2" style="left:967.3px"></i><i class="t2" style="left:984.7px"></i><i class="t2" style="left:993.3px"></i><i class="t2" style="left:1002.0px"></i><i class="t2" style="left:1010.7px"></i><i class="t5" style="left:1019.4px"></i><i class="t2" style="left:1028.0px"></i><i class="t2" style="left:1036.7px"></i><i class="t2" style="left:1045.4px"></i><i class="t2" style="left:1054.0px"></i><i class="t2" style="left:1071.4px"></i><i class="t2" style="left:1080.0px"></i><i class="t2" style="left:1088.7px"></i><i class="t2" style="left:1097.4px"></i><i class="t5" style="left:1106.0px"></i><i class="t2" style="left:1114.7px"></i><i class="t2" style="left:1123.4px"></i><i class="t2" style="left:1132.1px"></i><i class="t2" style="left:1140.7px"></i><i class="t2" style="left:1158.1px"></i><i class="t2" style="left:1166.7px"></i><i class="t2" style="left:1175.4px"></i><i class="t2" style="left:1184.1px"></i><i class="t5" style="left:1192.8px"></i><i class="t2" style="left:1201.4px"></i><i class="t2" style="left:1210.1px"></i><i class="t2" style="left:1218.8px"></i><i class="t2" style="left:1227.4px"></i><i class="t2" style="left:1244.8px"></i><i class="t2" style="left:1253.4px"></i><i class="t2" style="left:1262.1px"></i><i class="t2" style="left:1270.8px"></i><i class="t5" style="left:1279.5px"></i><i class="t2" style="left:1288.1px"></i><i class="t2" style="left:1296.8px"></i><i class="t2" style="left:1305.5px"></i><i class="t2" style="left:1314.1px"></i><i class="t2" style="left:1331.5px"></i><i class="t2" style="left:1340.1px"></i><i class="t2" style="left:1348.8px"></i><i class="t2" style="left:1357.5px"></i></div>
<div class="abs" id="rcorner"></div>
<div class="abs" id="vruler"><i class="mt" style="top:16.7px"></i><b style="top:20.2px">0</b><i class="mt" style="top:103.8px"></i><b style="top:107.3px">2<br>0</b><i class="mt" style="top:190.9px"></i><b style="top:194.4px">4<br>0</b><i class="mt" style="top:278.0px"></i><b style="top:281.5px">6<br>0</b><i class="mt" style="top:365.1px"></i><b style="top:368.6px">8<br>0</b><i class="mt" style="top:452.2px"></i><b style="top:455.7px">1<br>0<br>0</b><i class="mt" style="top:539.3px"></i><b style="top:542.8px">1<br>2<br>0</b><i class="t2" style="top:8.5px"></i><i class="t2" style="top:25.9px"></i><i class="t2" style="top:34.6px"></i><i class="t2" style="top:43.3px"></i><i class="t2" style="top:52.0px"></i><i class="t5" style="top:60.7px"></i><i class="t2" style="top:69.5px"></i><i class="t2" style="top:78.2px"></i><i class="t2" style="top:86.9px"></i><i class="t2" style="top:95.6px"></i><i class="t2" style="top:113.0px"></i><i class="t2" style="top:121.7px"></i><i class="t2" style="top:130.4px"></i><i class="t2" style="top:139.1px"></i><i class="t5" style="top:147.8px"></i><i class="t2" style="top:156.6px"></i><i class="t2" style="top:165.3px"></i><i class="t2" style="top:174.0px"></i><i class="t2" style="top:182.7px"></i><i class="t2" style="top:200.1px"></i><i class="t2" style="top:208.8px"></i><i class="t2" style="top:217.5px"></i><i class="t2" style="top:226.2px"></i><i class="t5" style="top:235.0px"></i><i class="t2" style="top:243.7px"></i><i class="t2" style="top:252.4px"></i><i class="t2" style="top:261.1px"></i><i class="t2" style="top:269.8px"></i><i class="t2" style="top:287.2px"></i><i class="t2" style="top:295.9px"></i><i class="t2" style="top:304.6px"></i><i class="t2" style="top:313.3px"></i><i class="t5" style="top:322.1px"></i><i class="t2" style="top:330.8px"></i><i class="t2" style="top:339.5px"></i><i class="t2" style="top:348.2px"></i><i class="t2" style="top:356.9px"></i><i class="t2" style="top:374.3px"></i><i class="t2" style="top:383.0px"></i><i class="t2" style="top:391.7px"></i><i class="t2" style="top:400.4px"></i><i class="t5" style="top:409.2px"></i><i class="t2" style="top:417.9px"></i><i class="t2" style="top:426.6px"></i><i class="t2" style="top:435.3px"></i><i class="t2" style="top:444.0px"></i><i class="t2" style="top:461.4px"></i><i class="t2" style="top:470.1px"></i><i class="t2" style="top:478.8px"></i><i class="t2" style="top:487.5px"></i><i class="t5" style="top:496.3px"></i><i class="t2" style="top:505.0px"></i><i class="t2" style="top:513.7px"></i><i class="t2" style="top:522.4px"></i><i class="t2" style="top:531.1px"></i><i class="t2" style="top:548.5px"></i><i class="t2" style="top:557.2px"></i><i class="t2" style="top:565.9px"></i><i class="t2" style="top:574.6px"></i><i class="t5" style="top:583.4px"></i><i class="t2" style="top:592.1px"></i><i class="t2" style="top:600.8px"></i><i class="t2" style="top:609.5px"></i><i class="t2" style="top:618.2px"></i></div>
<div class="abs" id="gap"></div>
<div class="abs" id="toolhead"></div>
<div class="abs" id="tools"></div>
<svg class="abs" style="left:0;top:90px" width="60" height="678" viewBox="0 90 60 678" font-family="Liberation Serif, serif">
  <!-- header double chevron -->
  <path d="M7,95 l4.500,4 l-4.500,4z M12.500,95 l4.500,4 l-4.500,4z" fill="#e0e0e0"/>
  <!-- grip dots -->
  <g fill="#333"><rect x="14" y="114" width="2" height="3"/><rect x="18" y="114" width="2" height="3"/><rect x="22" y="114" width="2" height="3"/><rect x="26" y="114" width="2" height="3"/><rect x="30" y="114" width="2" height="3"/><rect x="34" y="114" width="2" height="3"/><rect x="38" y="114" width="2" height="3"/></g>
  <g fill="#cfcfcf" stroke="none">
  <!-- move -->
  <path d="M15.500,139.500 V154.500 L26,148.500z"/>
  <g stroke="#cfcfcf" stroke-width="1.600" fill="none"><path d="M28.500,152 H38.500 M33.500,147 V157"/></g>
  <path d="M33.500,144.800 l2.600,3 h-5.200z M33.500,159.200 l2.600,-3 h-5.200z M26.300,152 l3,-2.600 v5.200z M40.700,152 l-3,-2.600 v5.200z"/>
  <!-- marquee -->
  <rect x="16.500" y="177.500" width="20" height="18" fill="none" stroke="#cfcfcf" stroke-width="2" stroke-dasharray="5 3"/>
  <!-- lasso -->
  <ellipse cx="27.500" cy="222" rx="11.500" ry="7.500" fill="none" stroke="#cfcfcf" stroke-width="2" transform="rotate(-12 27.500 222)"/>
  <path d="M17,226 c2,2 5,3 6,6 c-1,2 -2,3 -1.500,4.500" fill="none" stroke="#cfcfcf" stroke-width="1.800"/>
  <circle cx="19" cy="228.500" r="2.300" fill="none" stroke="#cfcfcf" stroke-width="1.400"/>
  <!-- quick select -->
  <path d="M16.500,270 a6.500,7.500 0 0 1 5,-16 l4,4" fill="none" stroke="#cfcfcf" stroke-width="1.500" stroke-dasharray="2 2"/>
  <path d="M40,253.500 l2,1.800 l-11,12 l-2.600,-2.400z"/>
  <path d="M21,268 c2,-5 8,-6 11,-3.500 c-1,5 -6,7.500 -11,3.500z"/>
  <!-- crop -->
  <path d="M20,288 h3.500 v16.500 h14 v3.500 h-17.500z"/>
  <path d="M15.500,292.500 h17.500 v18 h-3.500 v-14.500 h-14z"/>
  <path d="M26,302 L37.500,290" stroke="#cfcfcf" stroke-width="1.300"/>
  <!-- eyedropper -->
  <g transform="translate(27.500,338) rotate(45)">
    <rect x="-3" y="-16" width="6" height="8" rx="2.500"/>
    <rect x="-5" y="-9" width="10" height="3.500"/>
    <path d="M-2.300,-5.500 h4.600 v14 l-2.300,6 l-2.300,-6z" fill="none" stroke="#cfcfcf" stroke-width="1.500"/>
  </g>
  <!-- healing brush -->
  <path d="M24,373 a7,8.500 0 0 0 -7,16" fill="none" stroke="#cfcfcf" stroke-width="1.600" stroke-dasharray="1.600 1.800"/>
  <g transform="translate(29,381.500) rotate(-45)">
    <rect x="-14" y="-5" width="28" height="10" rx="4.500" fill="#bdbdbd"/>
    <rect x="-4.500" y="-5" width="9" height="10" fill="#a4a4a4"/>
    <g fill="#666"><circle cx="-2" cy="-2" r=".9"/><circle cx="2" cy="-2" r=".9"/><circle cx="-2" cy="2" r=".9"/><circle cx="2" cy="2" r=".9"/><circle cx="-8.500" cy="0" r=".9"/><circle cx="8.500" cy="0" r=".9"/></g>
  </g>
  <!-- brush -->
  <path d="M39,406.500 l2,1.600 l-12.500,15 l-3,-2.400z" fill="#b8b8b8"/>
  <path d="M14,427 c3,-1 5,-5 10,-6.500 l3.500,3 c-1,5 -8,7.500 -13.500,3.500z"/>
  <!-- stamp -->
  <circle cx="26.500" cy="448.500" r="4.500"/>
  <path d="M24,452 h5 l1.500,8 h-8z"/>
  <rect x="15.500" y="459.500" width="22" height="6.500"/>
  <rect x="17" y="468" width="19" height="1.500" fill="#a9a9a9"/>
  <!-- history brush -->
  <path d="M38,484.500 l2,1.600 l-11,13 l-3,-2.400z" fill="#b8b8b8"/>
  <path d="M15,502.500 c3,-1 4,-4.500 9,-6 l3.500,3 c-1,4.500 -7,6.500 -12.500,3z"/>
  <path d="M17,489.500 l5,-4.500 v3 c5,-1 9,0 12,1.500 c-4,-0.500 -8,0 -12,1.500 v3z"/>
  <g fill="#9a9a9a"><circle cx="36" cy="496" r="1"/><circle cx="37.500" cy="499.500" r="1"/><circle cx="35" cy="502" r="1"/></g>
  <!-- eraser -->
  <path d="M27,523 h13 l-11,9.500 h-13z" fill="#d6d6d6"/>
  <path d="M16,533.500 h12.500 v7.500 h-12.500z" fill="#bcbcbc"/>
  <path d="M29.500,533 l10.500,-9 v5.500 c0,2 -6,8 -10.500,11.500z" fill="#a5a5a5"/>
  <!-- paint bucket -->
  <path d="M22.500,566 v-5 a3.500,4 0 0 1 7,0 v6" fill="none" stroke="#d2d2d2" stroke-width="1.700"/>
  <path d="M15,571 l11,-7 l10,10 l-11,8 c-4,1 -11,-5 -10,-11z" fill="#c6c6c6"/>
  <path d="M34,570 c3,2 4.500,5 4.500,9 c-1.500,2.500 -4,2 -4.500,0 c1,-3 1,-5 -1,-8z" fill="#dcdcdc"/>
  <!-- smudge (finger) -->
  <path d="M21,597.500 h13 c2.500,0 3.500,2 3.500,5 c0,5.500 -2.500,9.500 -6.500,9.500 c-1.500,0 -2.500,-1 -3,-2 l-7.500,8.500 c-2,2 -5,-0.500 -3,-3 l7,-8 c-3.500,-0.500 -6,-2.500 -6,-6 c0,-2.500 1,-4 2.500,-4z"/>
  <!-- dodge -->
  <circle cx="24.200" cy="643.500" r="7.800"/>
  <path d="M29,649 L37,657" stroke="#cfcfcf" stroke-width="2.400" stroke-linecap="round"/>
  </g>
  <!-- selected pen bg -->
  <rect x="5.500" y="672" width="44" height="33" rx="3" fill="#383838"/>
  <g transform="translate(28.500,688) rotate(45)">
    <path d="M-5.500,-14 h11 v3.800 h-11z" fill="#d6d6d6"/>
    <path d="M-4.200,-9.500 h8.400 l2.600,8 L0.600,17 h-1.200 L-6.800,-1.500z" fill="#cfcfcf"/>
    <path d="M0,3 V16" stroke="#6a6a6a" stroke-width="1"/>
    <circle cx="0" cy="1.500" r="1.700" fill="#2a2a2a"/>
  </g>
  <!-- Type tool -->
  <text x="26.800" y="735.800" font-size="32.500" fill="#c9c9c9" text-anchor="middle">T</text>
  <!-- path selection arrow -->
  <path d="M20.500,750.500 V776 H44 Z" fill="#111" stroke="#d4d4d4" stroke-width="1.800"/>
  <!-- separators -->
  <rect x="7" y="359" width="41" height="1" fill="#3c3c3c"/><rect x="7" y="360" width="41" height="1" fill="#616161"/>
  <rect x="7" y="666" width="41" height="1" fill="#3c3c3c"/><rect x="7" y="667" width="41" height="1" fill="#616161"/>
  <!-- corner triangles -->
  <g fill="#dedede">
   <path d="M45.500,196.500 v5 h-5z"/><path d="M45.500,235 v5 h-5z"/><path d="M45.500,272.500 v5 h-5z"/><path d="M45.500,311 v5 h-5z"/><path d="M45.500,348.500 v5 h-5z"/>
   <path d="M45.500,391 v5 h-5z"/><path d="M45.500,428 v5 h-5z"/><path d="M45.500,466.500 v5 h-5z"/><path d="M45.500,504 v5 h-5z"/><path d="M45.500,541.500 v5 h-5z"/>
   <path d="M45.500,580 v5 h-5z"/><path d="M45.500,617 v5 h-5z"/><path d="M45.500,655 v5 h-5z"/><path d="M45.500,697 v5 h-5z"/><path d="M45.500,735.500 v5 h-5z"/>
  </g>
</svg>
<div class="abs menu" id="fmenu" style="left:433.6px;top:33.4px;width:380.2px;height:598.6px">
<div class="hl" style="left:2.7px;top:430.2px;width:367.7px;height:26.500px"></div>
<div class="sep" style="top:34.7px"></div>
<div class="sep" style="top:75.9px"></div>
<div class="sep" style="top:254.9px"></div>
<div class="sep" style="top:517.4px"></div>
<div class="sep" style="top:557.3px"></div>
<div class="mi" style="left:28.4px;top:4.15px;letter-spacing:0.07px">Wind</div>
<div class="sc" style="top:4.15px">Ctrl+F</div>
<div class="mi" style="left:28.4px;top:45.00px;letter-spacing:-0.03px">Convert for Smart Filters</div>
<div class="mi" style="left:28.4px;top:85.50px;letter-spacing:-0.17px">Filter Gallery...</div>
<div class="mi" style="left:28.4px;top:113.20px;letter-spacing:0.10px">Adaptive Wide Angle...</div>
<div class="sc" style="top:113.20px">Shift+Ctrl+A</div>
<div class="mi" style="left:28.4px;top:140.75px;letter-spacing:-0.11px">Lens Correction...</div>
<div class="sc" style="top:140.75px">Shift+Ctrl+R</div>
<div class="mi" style="left:28.4px;top:168.20px;letter-spacing:0.23px">Liquify...</div>
<div class="sc" style="top:168.20px">Shift+Ctrl+X</div>
<div class="mi" style="left:28.4px;top:195.90px;letter-spacing:-0.12px">Oil Paint...</div>
<div class="mi" style="left:28.4px;top:223.55px;letter-spacing:0.07px">Vanishing Point...</div>
<div class="sc" style="top:223.55px">Alt+Ctrl+V</div>
<div class="mi" style="left:28.4px;top:265.95px;letter-spacing:-0.15px">Blur</div>
<div class="arr" style="left:359.0px;top:272.5px"></div>
<div class="mi" style="left:28.4px;top:293.60px;letter-spacing:0.06px">Distort</div>
<div class="arr" style="left:359.0px;top:300.1px"></div>
<div class="mi" style="left:28.4px;top:321.20px;letter-spacing:-0.30px">Noise</div>
<div class="arr" style="left:359.0px;top:327.7px"></div>
<div class="mi" style="left:28.4px;top:348.80px;letter-spacing:-0.38px">Pixelate</div>
<div class="arr" style="left:359.0px;top:355.3px"></div>
<div class="mi" style="left:28.4px;top:376.40px;letter-spacing:-0.53px">Render</div>
<div class="arr" style="left:359.0px;top:382.9px"></div>
<div class="mi" style="left:28.4px;top:404.10px;letter-spacing:-0.47px">Sharpen</div>
<div class="arr" style="left:359.0px;top:410.6px"></div>
<div class="mi" style="left:28.4px;top:432.00px;letter-spacing:-0.40px;color:#e4f4ff">Stylize</div>
<div class="arr" style="left:359.0px;top:438.5px;border-left-color:#fff"></div>
<div class="mi" style="left:28.4px;top:459.60px;letter-spacing:-0.24px">Video</div>
<div class="arr" style="left:359.0px;top:466.1px"></div>
<div class="mi" style="left:28.4px;top:487.40px;letter-spacing:-0.10px">Other</div>
<div class="arr" style="left:359.0px;top:493.9px"></div>
<div class="mi" style="left:28.4px;top:528.20px;letter-spacing:0.12px">Digimarc</div>
<div class="arr" style="left:359.0px;top:534.7px"></div>
<div class="mi" style="left:28.4px;top:567.30px;letter-spacing:-0.15px">Browse Filters Online...</div>
</div>
<div class="abs menu" id="smenu" style="left:806.3px;top:460.2px;width:176.0px;height:229.1px">
<div class="hl" style="left:2.7px;top:196.8px;width:168.4px;height:26.500px"></div>
<div class="mi" style="left:27.7px;top:4.20px;letter-spacing:-0.10px">Diffuse...</div>
<div class="mi" style="left:27.7px;top:32.20px;letter-spacing:-0.43px">Emboss...</div>
<div class="mi" style="left:27.7px;top:59.60px;letter-spacing:-0.38px">Extrude...</div>
<div class="mi" style="left:27.7px;top:87.40px;letter-spacing:-0.42px">Find Edges</div>
<div class="mi" style="left:27.7px;top:115.10px;letter-spacing:-0.45px">Solarize</div>
<div class="mi" style="left:27.7px;top:142.70px;letter-spacing:-0.33px">Tiles...</div>
<div class="mi" style="left:27.7px;top:170.40px;letter-spacing:0.09px">Trace Contour...</div>
<div class="mi" style="left:27.7px;top:198.30px;letter-spacing:0.07px;color:#c2e8ff">Wind</div>
</div>
<!-- Filter highlight + red box -->
<div class="abs" style="left:432px;top:6px;width:65px;height:28px;background:#363636;border-radius:3px"></div>
<div class="abs" style="left:444.700px;top:10px;font-size:18px;color:#f2f2f2;letter-spacing:-0.52px;white-space:nowrap;line-height:21px">Filter</div>
<div class="abs" style="left:425.500px;top:-1px;width:78.500px;height:42.500px;border:5px solid #e8212b"></div>
<!-- red arrow -->
<svg class="abs" style="left:985px;top:635px" width="130" height="80" viewBox="985 635 130 80">
  <path d="M997.500,675 L1050.500,648 V661 H1102.500 V690.500 H1050.500 V703 Z" fill="none" stroke="#ea1c24" stroke-width="4.200" stroke-linejoin="miter"/>
</svg>
<!-- cursor -->
<svg class="abs" style="left:868px;top:660px" width="30" height="36" viewBox="868 660 30 36">
  <path transform="translate(-2.300,-0.500)" d="M875,666 V688.800 L880,684.300 L883.500,692 L887,690.500 L883.500,683 H890.800 Z" fill="#fff" stroke="#111" stroke-width="1.300" stroke-linejoin="round"/>
</svg>
<div class="abs" id="rightedge" style="left:1365px;top:0;width:1px;height:90px;background:#2f2f2f"></div>

</body>
</html>
